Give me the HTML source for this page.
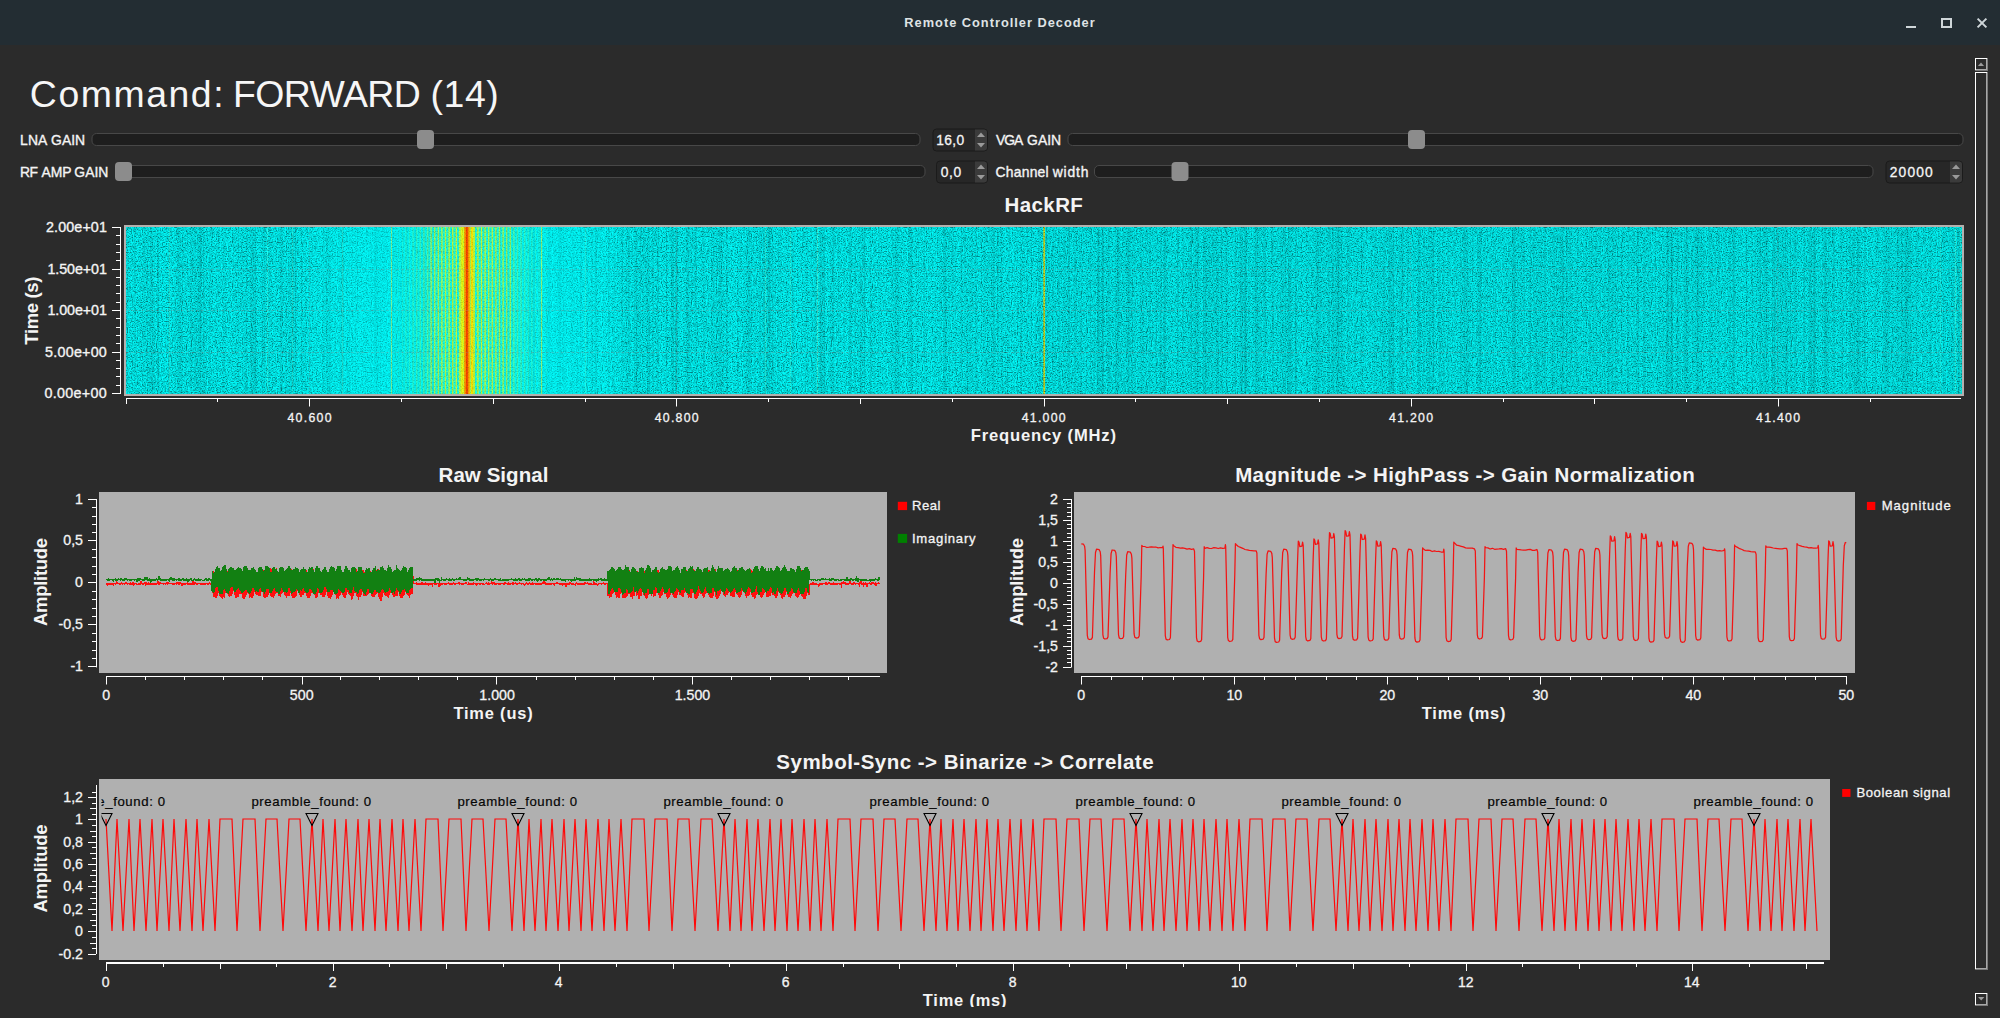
<!DOCTYPE html>
<html><head><meta charset="utf-8"><title>Remote Controller Decoder</title>
<style>
html,body{margin:0;padding:0;background:#2b2b2b;overflow:hidden}
svg{display:block;font-family:"Liberation Sans",sans-serif}
</style></head>
<body>
<svg width="2000" height="1018" viewBox="0 0 2000 1018">
<rect x="0" y="0" width="2000" height="1018" fill="#2b2b2b"/>
<g id="titlebar">
<rect x="0" y="0" width="2000" height="45" fill="#232d33"/>
<text x="904.35" y="26.8" font-size="12.8" font-weight="700" fill="#dfe3e5" textLength="190.30" lengthAdjust="spacing">Remote Controller Decoder</text>
<rect x="1906" y="26" width="10" height="2" fill="#cfd6d9"/>
<rect x="1942" y="19" width="9" height="8" fill="none" stroke="#cfd6d9" stroke-width="2"/>
<path d="M1977.6 18.6 L1986.4 27.4 M1986.4 18.6 L1977.6 27.4" stroke="#cfd6d9" stroke-width="2" fill="none"/>
</g>
<g id="controls">
<text x="29.83" y="106.6" font-size="37.4" font-weight="400" fill="#f6f6f6" textLength="193.74" lengthAdjust="spacing">Command:</text>
<text x="233.07" y="106.6" font-size="37.4" font-weight="400" fill="#f6f6f6" textLength="187.65" lengthAdjust="spacing">FORWARD</text>
<text x="430.58" y="106.6" font-size="37.4" font-weight="400" fill="#f6f6f6" textLength="68.15" lengthAdjust="spacing">(14)</text>
<text x="20.10" y="144.8" font-size="13.9" font-weight="400" fill="#f4f4f4" stroke="#f4f4f4" stroke-width="0.35" textLength="27.13" lengthAdjust="spacing">LNA</text>
<text x="51.11" y="144.8" font-size="13.9" font-weight="400" fill="#f4f4f4" stroke="#f4f4f4" stroke-width="0.35" textLength="34.02" lengthAdjust="spacing">GAIN</text>
<rect x="92.0" y="133.5" width="828.0" height="12" rx="4.5" ry="4.5" fill="#1e1e1e" stroke="#484848" stroke-width="1"/>
<rect x="417.0" y="130.0" width="17" height="19" rx="4" ry="4" fill="#8c8c8c"/>
<rect x="933.0" y="129.0" width="54.5" height="22.0" rx="3.5" ry="3.5" fill="#272727" stroke="#1b1b1b" stroke-width="1"/>
<path d="M975 129.5 H984 Q987 129.5 987 132.5 V147.5 Q987 150.5 984 150.5 H975 Z" fill="#3b3b3b"/>
<path d="M977 137.0 L981 132.5 L985 137.0 Z" fill="#9a9a9a"/>
<path d="M977 143.0 L981 147.5 L985 143.0 Z" fill="#9a9a9a"/>
<text x="936.23" y="145.3" font-size="13.8" font-weight="400" fill="#f4f4f4" stroke="#f4f4f4" stroke-width="0.3" textLength="27.89" lengthAdjust="spacing">16,0</text>
<text x="995.96" y="144.8" font-size="13.9" font-weight="400" fill="#f4f4f4" stroke="#f4f4f4" stroke-width="0.35" textLength="27.26" lengthAdjust="spacing">VGA</text>
<text x="1027.11" y="144.8" font-size="13.9" font-weight="400" fill="#f4f4f4" stroke="#f4f4f4" stroke-width="0.35" textLength="34.02" lengthAdjust="spacing">GAIN</text>
<rect x="1068.0" y="133.5" width="895.0" height="12" rx="4.5" ry="4.5" fill="#1e1e1e" stroke="#484848" stroke-width="1"/>
<rect x="1408.0" y="130.0" width="17" height="19" rx="4" ry="4" fill="#8c8c8c"/>
<text x="20.10" y="176.8" font-size="13.9" font-weight="400" fill="#f4f4f4" stroke="#f4f4f4" stroke-width="0.35" textLength="17.94" lengthAdjust="spacing">RF</text>
<text x="41.47" y="176.8" font-size="13.9" font-weight="400" fill="#f4f4f4" stroke="#f4f4f4" stroke-width="0.35" textLength="30.07" lengthAdjust="spacing">AMP</text>
<text x="74.31" y="176.8" font-size="13.9" font-weight="400" fill="#f4f4f4" stroke="#f4f4f4" stroke-width="0.35" textLength="34.02" lengthAdjust="spacing">GAIN</text>
<rect x="115.5" y="165.5" width="809.5" height="12" rx="4.5" ry="4.5" fill="#1e1e1e" stroke="#484848" stroke-width="1"/>
<rect x="115.0" y="162.0" width="17" height="19" rx="4" ry="4" fill="#8c8c8c"/>
<rect x="936.5" y="161.0" width="51" height="22.0" rx="3.5" ry="3.5" fill="#272727" stroke="#1b1b1b" stroke-width="1"/>
<path d="M975 161.5 H984 Q987 161.5 987 164.5 V179.5 Q987 182.5 984 182.5 H975 Z" fill="#3b3b3b"/>
<path d="M977 169.0 L981 164.5 L985 169.0 Z" fill="#9a9a9a"/>
<path d="M977 175.0 L981 179.5 L985 175.0 Z" fill="#9a9a9a"/>
<text x="940.65" y="177.3" font-size="13.8" font-weight="400" fill="#f4f4f4" stroke="#f4f4f4" stroke-width="0.3" textLength="20.54" lengthAdjust="spacing">0,0</text>
<text x="995.61" y="176.8" font-size="13.9" font-weight="400" fill="#f4f4f4" stroke="#f4f4f4" stroke-width="0.35" textLength="53.01" lengthAdjust="spacing">Channel</text>
<text x="1052.71" y="176.8" font-size="13.9" font-weight="400" fill="#f4f4f4" stroke="#f4f4f4" stroke-width="0.35" textLength="35.76" lengthAdjust="spacing">width</text>
<rect x="1094.5" y="165.5" width="778.5" height="12" rx="4.5" ry="4.5" fill="#1e1e1e" stroke="#484848" stroke-width="1"/>
<rect x="1171.5" y="162.0" width="17" height="19" rx="4" ry="4" fill="#8c8c8c"/>
<rect x="1886.0" y="161.0" width="76.5" height="22.0" rx="3.5" ry="3.5" fill="#272727" stroke="#1b1b1b" stroke-width="1"/>
<path d="M1950 161.5 H1959 Q1962 161.5 1962 164.5 V179.5 Q1962 182.5 1959 182.5 H1950 Z" fill="#3b3b3b"/>
<path d="M1952 169.0 L1956 164.5 L1960 169.0 Z" fill="#9a9a9a"/>
<path d="M1952 175.0 L1956 179.5 L1960 175.0 Z" fill="#9a9a9a"/>
<text x="1889.86" y="177.3" font-size="13.8" font-weight="400" fill="#f4f4f4" stroke="#f4f4f4" stroke-width="0.3" textLength="42.72" lengthAdjust="spacing">20000</text>
</g>
<g id="scrollbar">
<rect x="1975" y="58" width="13" height="13" fill="#2b2b2b"/>
<rect x="1975" y="58" width="13" height="1" fill="#ffffff"/>
<rect x="1975" y="58" width="1" height="13" fill="#ffffff"/>
<rect x="1986" y="59" width="1" height="12" fill="#a8a8a8"/>
<rect x="1987" y="58" width="1" height="13" fill="#7a7a7a"/>
<rect x="1976" y="69" width="11" height="1" fill="#a8a8a8"/>
<rect x="1975" y="70" width="13" height="1" fill="#7a7a7a"/>
<path d="M1977.9 66 L1981 62.6 L1984.1 66 Z" fill="#9a9a9a"/>
<rect x="1975" y="72" width="13" height="898" fill="#2b2b2b"/>
<rect x="1975" y="72" width="13" height="1" fill="#ffffff"/>
<rect x="1975" y="72" width="1" height="898" fill="#ffffff"/>
<rect x="1986" y="73" width="1" height="897" fill="#a8a8a8"/>
<rect x="1987" y="72" width="1" height="898" fill="#7a7a7a"/>
<rect x="1976" y="968" width="11" height="1" fill="#a8a8a8"/>
<rect x="1975" y="969" width="13" height="1" fill="#7a7a7a"/>
<rect x="1975" y="993" width="13" height="13" fill="#2b2b2b"/>
<rect x="1975" y="993" width="13" height="1" fill="#ffffff"/>
<rect x="1975" y="993" width="1" height="13" fill="#ffffff"/>
<rect x="1986" y="994" width="1" height="12" fill="#a8a8a8"/>
<rect x="1987" y="993" width="1" height="13" fill="#7a7a7a"/>
<rect x="1976" y="1004" width="11" height="1" fill="#a8a8a8"/>
<rect x="1975" y="1005" width="13" height="1" fill="#7a7a7a"/>
<path d="M1978 997 L1981.2 1000.4 L1984.4 997 Z" fill="#9a9a9a"/>
</g>
<g id="waterfall">
<text x="1004.54" y="212" font-size="20.5" font-weight="700" fill="#f4f4f4" textLength="78.33" lengthAdjust="spacing">HackRF</text>
<rect x="124" y="225" width="1840" height="171" fill="#b4b0ae"/>
<defs><filter id="nz" x="0" y="0" width="100%" height="100%" color-interpolation-filters="sRGB"><feTurbulence type="fractalNoise" baseFrequency="0.8" numOctaves="1" seed="11" result="t"/><feColorMatrix in="t" type="matrix" values="0 0 0 0 0  0 0 0 0 0  0 0 0 0 0  1 0 0 0 0"/><feComponentTransfer><feFuncA type="table" tableValues="0.5 0.5 0.5 0.41 0.235 0.10 0.03 0.005 0 0 0"/></feComponentTransfer></filter><filter id="nz2" x="0" y="0" width="100%" height="100%" color-interpolation-filters="sRGB"><feTurbulence type="fractalNoise" baseFrequency="0.35 0.22" numOctaves="2" seed="4" result="t"/><feColorMatrix in="t" type="matrix" values="0 0 0 0 0  0 0 0 0 0  0 0 0 0 0  0.45 0 0 0 -0.21"/></filter><filter id="nz3" x="0" y="0" width="100%" height="100%" color-interpolation-filters="sRGB"><feTurbulence type="fractalNoise" baseFrequency="0.45 0.0015" numOctaves="2" seed="9" result="t"/><feColorMatrix in="t" type="matrix" values="0 0 0 0 0  0 0 0 0 0  0 0 0 0 0  0.32 0 0 0 -0.135"/></filter><pattern id="rows" x="0" y="227" width="8" height="4.5" patternUnits="userSpaceOnUse"><rect x="0" y="0" width="8" height="2" fill="#7dff82"/></pattern><linearGradient id="rowfade" x1="0" x2="1" y1="0" y2="0"><stop offset="0" stop-color="#fff" stop-opacity="0.02"/><stop offset="0.22" stop-color="#fff" stop-opacity="0.08"/><stop offset="0.25" stop-color="#fff" stop-opacity="0.30"/><stop offset="0.44" stop-color="#fff" stop-opacity="0.75"/><stop offset="0.56" stop-color="#fff" stop-opacity="0.75"/><stop offset="0.78" stop-color="#fff" stop-opacity="0.28"/><stop offset="0.82" stop-color="#fff" stop-opacity="0.07"/><stop offset="1" stop-color="#fff" stop-opacity="0.02"/></linearGradient><linearGradient id="nzfade" x1="0" x2="1" y1="0" y2="0"><stop offset="0" stop-color="#fff"/><stop offset="0.14" stop-color="#c0c0c0"/><stop offset="0.28" stop-color="#909090"/><stop offset="0.42" stop-color="#686868"/><stop offset="0.47" stop-color="#585858"/><stop offset="0.53" stop-color="#585858"/><stop offset="0.62" stop-color="#6c6c6c"/><stop offset="0.74" stop-color="#909090"/><stop offset="0.88" stop-color="#c4c4c4"/><stop offset="1" stop-color="#fff"/></linearGradient><mask id="nzmask" maskUnits="userSpaceOnUse" x="126" y="227" width="1836" height="167"><rect x="126" y="227" width="1836" height="167" fill="#fff"/><rect x="292" y="227" width="350" height="167" fill="url(#nzfade)"/></mask><mask id="rowmask"><rect x="392" y="227" width="150" height="167" fill="url(#rowfade)"/></mask></defs>
<rect x="126" y="227" width="1836" height="167" fill="#00ffff"/>
<rect x="1044" y="227" width="918" height="167" fill="#008080" opacity="0.05"/>
<rect x="392" y="227" width="150" height="167" fill="url(#rows)" mask="url(#rowmask)"/>
<rect x="391" y="227" width="1" height="167" fill="#0ffff0"/>
<rect x="395" y="227" width="1" height="167" fill="#0dfff2"/>
<rect x="398" y="227" width="1" height="167" fill="#13ffec"/>
<rect x="402" y="227" width="1" height="167" fill="#19ffe6"/>
<rect x="405" y="227" width="1" height="167" fill="#19ffe6"/>
<rect x="406" y="227" width="1" height="167" fill="#15ffea"/>
<rect x="409" y="227" width="1" height="167" fill="#24ffdb"/>
<rect x="412" y="227" width="1" height="167" fill="#1bffe4"/>
<rect x="413" y="227" width="1" height="167" fill="#23ffdc"/>
<rect x="416" y="227" width="1" height="167" fill="#33ffcc"/>
<rect x="417" y="227" width="1" height="167" fill="#19ffe6"/>
<rect x="419" y="227" width="1" height="167" fill="#1bffe4"/>
<rect x="420" y="227" width="1" height="167" fill="#3cffc3"/>
<rect x="423" y="227" width="1" height="167" fill="#3bffc4"/>
<rect x="424" y="227" width="1" height="167" fill="#30ffcf"/>
<rect x="426" y="227" width="1" height="167" fill="#15ffea"/>
<rect x="427" y="227" width="1" height="167" fill="#51ffae"/>
<rect x="428" y="227" width="1" height="167" fill="#29ffd6"/>
<rect x="430" y="227" width="1" height="167" fill="#67ff98"/>
<rect x="431" y="227" width="1" height="167" fill="#85ff7a"/>
<rect x="433" y="227" width="1" height="167" fill="#14ffeb"/>
<rect x="434" y="227" width="1" height="167" fill="#9eff61"/>
<rect x="435" y="227" width="1" height="167" fill="#4bffb4"/>
<rect x="437" y="227" width="1" height="167" fill="#4dffb2"/>
<rect x="438" y="227" width="1" height="167" fill="#a5ff5a"/>
<rect x="439" y="227" width="1" height="167" fill="#16ffe9"/>
<rect x="441" y="227" width="1" height="167" fill="#94ff6b"/>
<rect x="442" y="227" width="1" height="167" fill="#75ff8a"/>
<rect x="444" y="227" width="1" height="167" fill="#31ffce"/>
<rect x="445" y="227" width="1" height="167" fill="#baff45"/>
<rect x="446" y="227" width="1" height="167" fill="#32ffcd"/>
<rect x="448" y="227" width="1" height="167" fill="#7cff83"/>
<rect x="449" y="227" width="1" height="167" fill="#a0ff5f"/>
<rect x="451" y="227" width="1" height="167" fill="#19ffe6"/>
<rect x="452" y="227" width="1" height="167" fill="#bdff42"/>
<rect x="453" y="227" width="1" height="167" fill="#5affa5"/>
<rect x="455" y="227" width="1" height="167" fill="#5cffa3"/>
<rect x="456" y="227" width="1" height="167" fill="#c4ff3b"/>
<rect x="457" y="227" width="1" height="167" fill="#1affe5"/>
<rect x="459" y="227" width="1" height="167" fill="#afff50"/>
<rect x="460" y="227" width="1" height="167" fill="#b4ff4c"/>
<rect x="461" y="227" width="1" height="167" fill="#e2ff1e"/>
<rect x="462" y="227" width="1" height="167" fill="#f2ff0e"/>
<rect x="463" y="227" width="1" height="167" fill="#d2ff2e"/>
<rect x="464" y="227" width="1" height="167" fill="#ffa800"/>
<rect x="465" y="227" width="1" height="167" fill="#ff9200"/>
<rect x="466" y="227" width="1" height="167" fill="#ff4400"/>
<rect x="467" y="227" width="1" height="167" fill="#ff5600"/>
<rect x="468" y="227" width="1" height="167" fill="#ff9a00"/>
<rect x="469" y="227" width="1" height="167" fill="#ffc200"/>
<rect x="470" y="227" width="1" height="167" fill="#a8ff58"/>
<rect x="471" y="227" width="1" height="167" fill="#fff200"/>
<rect x="472" y="227" width="1" height="167" fill="#ffee00"/>
<rect x="473" y="227" width="1" height="167" fill="#c4ff3c"/>
<rect x="474" y="227" width="1" height="167" fill="#cbff34"/>
<rect x="475" y="227" width="1" height="167" fill="#1affe5"/>
<rect x="477" y="227" width="1" height="167" fill="#acff53"/>
<rect x="478" y="227" width="1" height="167" fill="#86ff79"/>
<rect x="480" y="227" width="1" height="167" fill="#36ffc9"/>
<rect x="481" y="227" width="1" height="167" fill="#c9ff36"/>
<rect x="482" y="227" width="1" height="167" fill="#35ffca"/>
<rect x="484" y="227" width="1" height="167" fill="#80ff7f"/>
<rect x="485" y="227" width="1" height="167" fill="#a2ff5d"/>
<rect x="487" y="227" width="1" height="167" fill="#18ffe7"/>
<rect x="488" y="227" width="1" height="167" fill="#b6ff49"/>
<rect x="489" y="227" width="1" height="167" fill="#55ffaa"/>
<rect x="491" y="227" width="1" height="167" fill="#54ffab"/>
<rect x="492" y="227" width="1" height="167" fill="#b0ff4f"/>
<rect x="493" y="227" width="1" height="167" fill="#17ffe8"/>
<rect x="495" y="227" width="1" height="167" fill="#95ff6a"/>
<rect x="496" y="227" width="1" height="167" fill="#74ff8b"/>
<rect x="498" y="227" width="1" height="167" fill="#2effd1"/>
<rect x="499" y="227" width="1" height="167" fill="#adff52"/>
<rect x="500" y="227" width="1" height="167" fill="#2effd1"/>
<rect x="502" y="227" width="1" height="167" fill="#6eff91"/>
<rect x="503" y="227" width="1" height="167" fill="#8bff74"/>
<rect x="505" y="227" width="1" height="167" fill="#15ffea"/>
<rect x="506" y="227" width="1" height="167" fill="#9bff64"/>
<rect x="507" y="227" width="1" height="167" fill="#48ffb7"/>
<rect x="509" y="227" width="1" height="167" fill="#47ffb8"/>
<rect x="510" y="227" width="1" height="167" fill="#95ff6a"/>
<rect x="511" y="227" width="1" height="167" fill="#13ffec"/>
<rect x="513" y="227" width="1" height="167" fill="#42ffbd"/>
<rect x="514" y="227" width="1" height="167" fill="#32ffcd"/>
<rect x="516" y="227" width="1" height="167" fill="#13ffec"/>
<rect x="517" y="227" width="1" height="167" fill="#45ffba"/>
<rect x="518" y="227" width="1" height="167" fill="#12ffed"/>
<rect x="520" y="227" width="1" height="167" fill="#28ffd7"/>
<rect x="521" y="227" width="1" height="167" fill="#31ffce"/>
<rect x="524" y="227" width="1" height="167" fill="#31ffce"/>
<rect x="525" y="227" width="1" height="167" fill="#14ffeb"/>
<rect x="527" y="227" width="1" height="167" fill="#13ffec"/>
<rect x="528" y="227" width="1" height="167" fill="#26ffd9"/>
<rect x="531" y="227" width="1" height="167" fill="#1dffe2"/>
<rect x="532" y="227" width="1" height="167" fill="#16ffe9"/>
<rect x="535" y="227" width="1" height="167" fill="#1dffe2"/>
<rect x="538" y="227" width="1" height="167" fill="#10ffef"/>
<rect x="539" y="227" width="1" height="167" fill="#13ffec"/>
<rect x="542" y="227" width="1" height="167" fill="#12ffed"/>
<rect x="546" y="227" width="1" height="167" fill="#0ffff0"/>
<rect x="541" y="227" width="1" height="167" fill="#b8ff60" opacity="0.8"/>
<rect x="1043" y="227" width="1" height="167" fill="#a8fa58" opacity="0.95"/>
<rect x="1044" y="227" width="1" height="167" fill="#e8ee20" opacity="0.95"/>
<rect x="169" y="227" width="1" height="167" fill="#60ffd8" opacity="0.4"/>
<rect x="267" y="227" width="1" height="167" fill="#60ffd8" opacity="0.35"/>
<rect x="292" y="227" width="1" height="167" fill="#60ffd8" opacity="0.3"/>
<rect x="342" y="227" width="1" height="167" fill="#70ffd0" opacity="0.3"/>
<rect x="391" y="227" width="1" height="167" fill="#a8ff80" opacity="0.7"/>
<rect x="585" y="227" width="1" height="167" fill="#60ffd0" opacity="0.3"/>
<rect x="765" y="227" width="1" height="167" fill="#60ffd0" opacity="0.35"/>
<rect x="790" y="227" width="1" height="167" fill="#60ffd0" opacity="0.3"/>
<rect x="817" y="227" width="1" height="167" fill="#70ffd0" opacity="0.5"/>
<rect x="1940" y="227" width="1" height="167" fill="#50ffe0" opacity="0.3"/>
<rect x="1955" y="227" width="1" height="167" fill="#50ffe0" opacity="0.5"/>
<rect x="1960" y="227" width="1" height="167" fill="#50ffe0" opacity="0.5"/>
<g mask="url(#nzmask)"><rect x="126" y="227" width="1836" height="167" fill="#000" filter="url(#nz)"/><rect x="126" y="227" width="1836" height="167" fill="#000" filter="url(#nz2)"/><rect x="126" y="227" width="1836" height="167" fill="#000" filter="url(#nz3)"/></g>
<line x1="126" x2="1962" y1="269.5" y2="269.5" stroke="#909090" stroke-width="1" stroke-dasharray="3 2" opacity="0.28"/>
<line x1="126" x2="1962" y1="310.5" y2="310.5" stroke="#909090" stroke-width="1" stroke-dasharray="3 2" opacity="0.28"/>
<line x1="126" x2="1962" y1="352.5" y2="352.5" stroke="#909090" stroke-width="1" stroke-dasharray="3 2" opacity="0.28"/>
<line x1="309.5" x2="309.5" y1="227" y2="394" stroke="#909090" stroke-width="1" stroke-dasharray="3 2" opacity="0.22"/>
<line x1="676.5" x2="676.5" y1="227" y2="394" stroke="#909090" stroke-width="1" stroke-dasharray="3 2" opacity="0.22"/>
<line x1="1410.5" x2="1410.5" y1="227" y2="394" stroke="#909090" stroke-width="1" stroke-dasharray="3 2" opacity="0.22"/>
<line x1="1777.5" x2="1777.5" y1="227" y2="394" stroke="#909090" stroke-width="1" stroke-dasharray="3 2" opacity="0.22"/>
<rect x="120" y="227" width="1" height="167" fill="#ffffff"/>
<rect x="112" y="393" width="8" height="1" fill="#ffffff"/>
<rect x="116" y="385" width="4" height="1" fill="#ffffff"/>
<rect x="116" y="376" width="4" height="1" fill="#ffffff"/>
<rect x="116" y="368" width="4" height="1" fill="#ffffff"/>
<rect x="116" y="360" width="4" height="1" fill="#ffffff"/>
<rect x="112" y="352" width="8" height="1" fill="#ffffff"/>
<rect x="116" y="343" width="4" height="1" fill="#ffffff"/>
<rect x="116" y="335" width="4" height="1" fill="#ffffff"/>
<rect x="116" y="327" width="4" height="1" fill="#ffffff"/>
<rect x="116" y="318" width="4" height="1" fill="#ffffff"/>
<rect x="112" y="310" width="8" height="1" fill="#ffffff"/>
<rect x="116" y="302" width="4" height="1" fill="#ffffff"/>
<rect x="116" y="293" width="4" height="1" fill="#ffffff"/>
<rect x="116" y="285" width="4" height="1" fill="#ffffff"/>
<rect x="116" y="277" width="4" height="1" fill="#ffffff"/>
<rect x="112" y="269" width="8" height="1" fill="#ffffff"/>
<rect x="116" y="260" width="4" height="1" fill="#ffffff"/>
<rect x="116" y="252" width="4" height="1" fill="#ffffff"/>
<rect x="116" y="244" width="4" height="1" fill="#ffffff"/>
<rect x="116" y="235" width="4" height="1" fill="#ffffff"/>
<rect x="112" y="227" width="8" height="1" fill="#ffffff"/>
<text x="45.96" y="232.3" font-size="14.3" font-weight="400" fill="#f4f4f4" stroke="#f4f4f4" stroke-width="0.35" textLength="60.93" lengthAdjust="spacing">2.00e+01</text>
<text x="47.52" y="274.3" font-size="14.3" font-weight="400" fill="#f4f4f4" stroke="#f4f4f4" stroke-width="0.35" textLength="59.36" lengthAdjust="spacing">1.50e+01</text>
<text x="47.52" y="315.3" font-size="14.3" font-weight="400" fill="#f4f4f4" stroke="#f4f4f4" stroke-width="0.35" textLength="59.36" lengthAdjust="spacing">1.00e+01</text>
<text x="45.11" y="357.3" font-size="14.3" font-weight="400" fill="#f4f4f4" stroke="#f4f4f4" stroke-width="0.35" textLength="61.71" lengthAdjust="spacing">5.00e+00</text>
<text x="44.54" y="398.3" font-size="14.3" font-weight="400" fill="#f4f4f4" stroke="#f4f4f4" stroke-width="0.35" textLength="62.17" lengthAdjust="spacing">0.00e+00</text>
<text transform="translate(38.0,311.1) rotate(-90)" x="-33.62" y="0" font-size="18.5" font-weight="700" fill="#f4f4f4" textLength="68.11" lengthAdjust="spacing">Time (s)</text>
<rect x="126" y="398" width="1835" height="1" fill="#ffffff"/>
<rect x="126" y="398" width="1" height="6" fill="#ffffff"/>
<rect x="217" y="398" width="1" height="4" fill="#ffffff"/>
<rect x="309" y="398" width="1" height="8.5" fill="#ffffff"/>
<rect x="401" y="398" width="1" height="4" fill="#ffffff"/>
<rect x="493" y="398" width="1" height="6" fill="#ffffff"/>
<rect x="585" y="398" width="1" height="4" fill="#ffffff"/>
<rect x="676" y="398" width="1" height="8.5" fill="#ffffff"/>
<rect x="768" y="398" width="1" height="4" fill="#ffffff"/>
<rect x="860" y="398" width="1" height="6" fill="#ffffff"/>
<rect x="952" y="398" width="1" height="4" fill="#ffffff"/>
<rect x="1044" y="398" width="1" height="8.5" fill="#ffffff"/>
<rect x="1135" y="398" width="1" height="4" fill="#ffffff"/>
<rect x="1227" y="398" width="1" height="6" fill="#ffffff"/>
<rect x="1319" y="398" width="1" height="4" fill="#ffffff"/>
<rect x="1411" y="398" width="1" height="8.5" fill="#ffffff"/>
<rect x="1503" y="398" width="1" height="4" fill="#ffffff"/>
<rect x="1594" y="398" width="1" height="6" fill="#ffffff"/>
<rect x="1686" y="398" width="1" height="4" fill="#ffffff"/>
<rect x="1778" y="398" width="1" height="8.5" fill="#ffffff"/>
<rect x="1870" y="398" width="1" height="4" fill="#ffffff"/>
<text x="287.44" y="421.6" font-size="12.3" font-weight="400" fill="#f4f4f4" stroke="#f4f4f4" stroke-width="0.3" textLength="44.04" lengthAdjust="spacing">40.600</text>
<text x="654.64" y="421.6" font-size="12.3" font-weight="400" fill="#f4f4f4" stroke="#f4f4f4" stroke-width="0.3" textLength="44.04" lengthAdjust="spacing">40.800</text>
<text x="1021.64" y="421.6" font-size="12.3" font-weight="400" fill="#f4f4f4" stroke="#f4f4f4" stroke-width="0.3" textLength="44.04" lengthAdjust="spacing">41.000</text>
<text x="1389.04" y="421.6" font-size="12.3" font-weight="400" fill="#f4f4f4" stroke="#f4f4f4" stroke-width="0.3" textLength="44.04" lengthAdjust="spacing">41.200</text>
<text x="1756.04" y="421.6" font-size="12.3" font-weight="400" fill="#f4f4f4" stroke="#f4f4f4" stroke-width="0.3" textLength="44.04" lengthAdjust="spacing">41.400</text>
<text x="970.84" y="441.4" font-size="16.6" font-weight="700" fill="#f4f4f4" textLength="145.15" lengthAdjust="spacing">Frequency (MHz)</text>
</g>
<g id="raw">
<text x="438.54" y="481.9" font-size="20.5" font-weight="700" fill="#f4f4f4" textLength="109.91" lengthAdjust="spacing">Raw Signal</text>
<rect x="99" y="492" width="788" height="181" fill="#b0b0b0"/>
<rect x="96" y="499" width="1" height="168.39999999999998" fill="#ffffff"/>
<rect x="88" y="499" width="8" height="1" fill="#ffffff"/>
<rect x="92" y="507" width="4" height="1" fill="#ffffff"/>
<rect x="92" y="516" width="4" height="1" fill="#ffffff"/>
<rect x="92" y="524" width="4" height="1" fill="#ffffff"/>
<rect x="92" y="532" width="4" height="1" fill="#ffffff"/>
<rect x="88" y="540" width="8" height="1" fill="#ffffff"/>
<rect x="92" y="549" width="4" height="1" fill="#ffffff"/>
<rect x="92" y="557" width="4" height="1" fill="#ffffff"/>
<rect x="92" y="566" width="4" height="1" fill="#ffffff"/>
<rect x="92" y="574" width="4" height="1" fill="#ffffff"/>
<rect x="88" y="582" width="8" height="1" fill="#ffffff"/>
<rect x="92" y="591" width="4" height="1" fill="#ffffff"/>
<rect x="92" y="599" width="4" height="1" fill="#ffffff"/>
<rect x="92" y="608" width="4" height="1" fill="#ffffff"/>
<rect x="92" y="616" width="4" height="1" fill="#ffffff"/>
<rect x="88" y="624" width="8" height="1" fill="#ffffff"/>
<rect x="92" y="633" width="4" height="1" fill="#ffffff"/>
<rect x="92" y="641" width="4" height="1" fill="#ffffff"/>
<rect x="92" y="650" width="4" height="1" fill="#ffffff"/>
<rect x="92" y="658" width="4" height="1" fill="#ffffff"/>
<rect x="88" y="666" width="8" height="1" fill="#ffffff"/>
<text x="83" y="504.4" font-size="14.2" font-weight="400" fill="#f4f4f4" text-anchor="end" stroke="#f4f4f4" stroke-width="0.3">1</text>
<text x="83" y="545.4" font-size="14.2" font-weight="400" fill="#f4f4f4" text-anchor="end" stroke="#f4f4f4" stroke-width="0.3">0,5</text>
<text x="83" y="587.4" font-size="14.2" font-weight="400" fill="#f4f4f4" text-anchor="end" stroke="#f4f4f4" stroke-width="0.3">0</text>
<text x="83" y="629.4" font-size="14.2" font-weight="400" fill="#f4f4f4" text-anchor="end" stroke="#f4f4f4" stroke-width="0.3">-0,5</text>
<text x="83" y="671.4" font-size="14.2" font-weight="400" fill="#f4f4f4" text-anchor="end" stroke="#f4f4f4" stroke-width="0.3">-1</text>
<text transform="translate(46.9,582) rotate(-90)" x="-44.10" y="0" font-size="18.5" font-weight="700" fill="#f4f4f4" textLength="88.25" lengthAdjust="spacing">Amplitude</text>
<rect x="106" y="676" width="774" height="1" fill="#ffffff"/>
<rect x="106" y="676" width="1" height="8.5" fill="#ffffff"/>
<rect x="145" y="676" width="1" height="4" fill="#ffffff"/>
<rect x="184" y="676" width="1" height="4" fill="#ffffff"/>
<rect x="223" y="676" width="1" height="4" fill="#ffffff"/>
<rect x="262" y="676" width="1" height="4" fill="#ffffff"/>
<rect x="302" y="676" width="1" height="8.5" fill="#ffffff"/>
<rect x="340" y="676" width="1" height="4" fill="#ffffff"/>
<rect x="379" y="676" width="1" height="4" fill="#ffffff"/>
<rect x="418" y="676" width="1" height="4" fill="#ffffff"/>
<rect x="457" y="676" width="1" height="4" fill="#ffffff"/>
<rect x="496" y="676" width="1" height="8.5" fill="#ffffff"/>
<rect x="536" y="676" width="1" height="4" fill="#ffffff"/>
<rect x="575" y="676" width="1" height="4" fill="#ffffff"/>
<rect x="614" y="676" width="1" height="4" fill="#ffffff"/>
<rect x="653" y="676" width="1" height="4" fill="#ffffff"/>
<rect x="692" y="676" width="1" height="8.5" fill="#ffffff"/>
<rect x="731" y="676" width="1" height="4" fill="#ffffff"/>
<rect x="770" y="676" width="1" height="4" fill="#ffffff"/>
<rect x="809" y="676" width="1" height="4" fill="#ffffff"/>
<rect x="848" y="676" width="1" height="4" fill="#ffffff"/>
<text x="106.3" y="699.7" font-size="14.2" font-weight="400" fill="#f4f4f4" text-anchor="middle" stroke="#f4f4f4" stroke-width="0.3">0</text>
<text x="301.7" y="699.7" font-size="14.2" font-weight="400" fill="#f4f4f4" text-anchor="middle" stroke="#f4f4f4" stroke-width="0.3">500</text>
<text x="497.1" y="699.7" font-size="14.2" font-weight="400" fill="#f4f4f4" text-anchor="middle" stroke="#f4f4f4" stroke-width="0.3">1.000</text>
<text x="692.5" y="699.7" font-size="14.2" font-weight="400" fill="#f4f4f4" text-anchor="middle" stroke="#f4f4f4" stroke-width="0.3">1.500</text>
<text x="453.38" y="719.4" font-size="16.4" font-weight="700" fill="#f4f4f4" textLength="79.32" lengthAdjust="spacing">Time (us)</text>
<polyline points="106.3,584.0 106.7,584.4 107.1,583.1 107.5,584.9 107.9,584.9 108.3,583.6 108.6,583.6 109.0,583.4 109.4,584.0 109.8,584.1 110.2,584.3 110.6,583.8 111.0,583.9 111.4,584.8 111.8,582.8 112.2,583.4 112.6,584.4 112.9,584.8 113.3,585.1 113.7,584.5 114.1,583.6 114.5,583.4 114.9,583.1 115.3,583.2 115.7,584.7 116.1,583.6 116.5,581.3 116.9,584.2 117.2,582.9 117.6,582.7 118.0,584.3 118.4,583.1 118.8,584.0 119.2,582.9 119.6,584.5 120.0,584.1 120.4,584.4 120.8,583.8 121.2,583.3 121.5,582.8 121.9,582.7 122.3,584.1 122.7,584.4 123.1,583.6 123.5,583.5 123.9,583.6 124.3,584.5 124.7,583.5 125.1,584.2 125.4,582.3 125.8,583.6 126.2,583.3 126.6,582.4 127.0,583.8 127.4,582.9 127.8,584.5 128.2,583.3 128.6,583.8 129.0,583.3 129.4,583.6 129.7,585.0 130.1,583.0 130.5,583.1 130.9,585.1 131.3,583.7 131.7,583.6 132.1,584.9 132.5,583.7 132.9,582.4 133.3,582.9 133.7,585.0 134.0,585.1 134.4,583.4 134.8,584.2 135.2,583.7 135.6,582.9 136.0,583.3 136.4,583.5 136.8,584.4 137.2,584.0 137.6,584.8 138.0,584.3 138.3,583.6 138.7,583.4 139.1,583.2 139.5,584.6 139.9,584.0 140.3,583.8 140.7,584.2 141.1,581.6 141.5,583.9 141.9,583.3 142.3,584.4 142.6,584.0 143.0,583.7 143.4,584.3 143.8,584.4 144.2,583.2 144.6,583.3 145.0,581.9 145.4,584.0 145.8,585.6 146.2,583.4 146.6,582.0 146.9,583.2 147.3,583.3 147.7,583.7 148.1,584.4 148.5,582.3 148.9,582.9 149.3,583.9 149.7,583.0 150.1,584.7 150.5,583.8 150.9,583.6 151.2,584.3 151.6,583.8 152.0,584.6 152.4,583.8 152.8,583.8 153.2,584.4 153.6,583.7 154.0,583.5 154.4,583.9 154.8,584.3 155.2,584.5 155.5,583.4 155.9,583.0 156.3,584.3 156.7,583.6 157.1,583.4 157.5,583.0 157.9,581.0 158.3,584.7 158.7,583.4 159.1,585.1 159.4,583.8 159.8,582.4 160.2,583.8 160.6,582.7 161.0,583.6 161.4,583.7 161.8,583.7 162.2,584.1 162.6,583.1 163.0,583.9 163.4,584.2 163.7,583.1 164.1,583.5 164.5,583.7 164.9,583.4 165.3,583.6 165.7,584.6 166.1,583.8 166.5,584.1 166.9,582.6 167.3,584.3 167.7,583.3 168.0,583.0 168.4,583.0 168.8,583.7 169.2,582.8 169.6,583.6 170.0,583.6 170.4,583.4 170.8,583.6 171.2,584.1 171.6,583.2 172.0,583.7 172.3,584.6 172.7,583.1 173.1,584.4 173.5,583.9 173.9,583.8 174.3,584.3 174.7,583.7 175.1,583.6 175.5,583.4 175.9,583.4 176.3,584.9 176.6,582.2 177.0,582.8 177.4,584.3 177.8,583.2 178.2,582.6 178.6,583.2 179.0,584.4 179.4,584.7 179.8,583.4 180.2,582.4 180.6,583.3 180.9,584.2 181.3,583.8 181.7,584.9 182.1,585.4 182.5,583.8 182.9,583.3 183.3,583.7 183.7,584.5 184.1,583.8 184.5,584.3 184.9,583.3 185.2,584.8 185.6,584.6 186.0,583.2 186.4,584.0 186.8,583.6 187.2,583.1 187.6,583.0 188.0,585.0 188.4,583.2 188.8,583.9 189.1,585.1 189.5,584.3 189.9,583.1 190.3,584.0 190.7,584.6 191.1,584.3 191.5,583.0 191.9,583.5 192.3,584.2 192.7,584.1 193.1,580.3 193.4,584.3 193.8,583.6 194.2,584.5 194.6,583.0 195.0,582.8 195.4,583.6 195.8,583.8 196.2,583.7 196.6,584.5 197.0,584.3 197.4,584.5 197.7,584.0 198.1,584.0 198.5,583.3 198.9,584.1 199.3,583.1 199.7,583.8 200.1,583.8 200.5,584.7 200.9,583.5 201.3,584.6 201.7,583.4 202.0,583.8 202.4,584.5 202.8,584.6 203.2,583.4 203.6,584.2 204.0,584.2 204.4,583.2 204.8,584.7 205.2,584.1 205.6,583.9 206.0,583.9 206.3,583.1 206.7,583.4 207.1,583.8 207.5,583.4 207.9,585.0 208.3,584.4 208.7,582.9 209.1,584.0 209.5,583.0 209.9,583.0 210.3,584.5 210.6,584.6 211.0,584.0 211.4,584.1 211.8,582.6 212.2,589.4 212.6,593.4 213.0,571.3 213.4,583.6 213.8,597.2 214.2,574.0 214.6,579.4 214.9,597.1 215.3,577.2 215.7,576.9 216.1,597.6 216.5,582.5 216.9,572.1 217.3,596.0 217.7,586.5 218.1,570.7 218.5,592.4 218.9,591.3 219.2,569.2 219.6,586.5 220.0,595.9 220.4,570.9 220.8,583.8 221.2,598.4 221.6,572.9 222.0,578.5 222.4,598.5 222.8,578.4 223.1,574.6 223.5,597.1 223.9,581.9 224.3,572.1 224.7,597.6 225.1,587.3 225.5,570.0 225.9,591.9 226.3,592.8 226.7,570.4 227.1,588.1 227.4,594.4 227.8,571.2 228.2,583.1 228.6,595.5 229.0,574.4 229.4,576.6 229.8,597.4 230.2,579.1 230.6,574.5 231.0,595.6 231.4,584.4 231.7,572.3 232.1,593.8 232.5,589.2 232.9,571.4 233.3,589.8 233.7,591.1 234.1,572.0 234.5,586.5 234.9,595.0 235.3,573.9 235.7,582.7 236.0,597.9 236.4,575.6 236.8,576.7 237.2,597.3 237.6,580.8 238.0,574.9 238.4,596.7 238.8,584.3 239.2,571.4 239.6,593.5 240.0,589.8 240.3,570.2 240.7,591.7 241.1,594.0 241.5,571.1 241.9,586.0 242.3,597.6 242.7,573.3 243.1,580.0 243.5,599.3 243.9,576.0 244.3,575.5 244.6,598.5 245.0,581.1 245.4,570.5 245.8,596.5 246.2,586.1 246.6,570.2 247.0,593.0 247.4,591.3 247.8,570.3 248.2,589.3 248.6,594.4 248.9,570.8 249.3,584.1 249.7,598.2 250.1,573.8 250.5,579.4 250.9,597.3 251.3,576.2 251.7,575.3 252.1,598.1 252.5,582.5 252.9,571.7 253.2,595.6 253.6,585.5 254.0,571.1 254.4,591.4 254.8,591.9 255.2,571.0 255.6,588.4 256.0,593.7 256.4,572.5 256.8,582.3 257.1,595.2 257.5,575.0 257.9,579.0 258.3,596.4 258.7,580.0 259.1,575.8 259.5,596.4 259.9,582.9 260.3,573.0 260.7,596.2 261.1,587.3 261.4,569.7 261.8,589.9 262.2,592.4 262.6,570.2 263.0,588.1 263.4,596.5 263.8,570.2 264.2,582.5 264.6,597.9 265.0,575.0 265.4,579.8 265.7,597.6 266.1,578.2 266.5,572.4 266.9,597.3 267.3,584.1 267.7,571.4 268.1,594.9 268.5,589.1 268.9,568.1 269.3,591.5 269.7,593.0 270.0,568.4 270.4,586.2 270.8,596.1 271.2,568.8 271.6,582.4 272.0,597.1 272.4,574.8 272.8,576.1 273.2,597.7 273.6,579.5 274.0,571.7 274.3,595.6 274.7,584.9 275.1,571.8 275.5,593.9 275.9,590.5 276.3,568.5 276.7,589.0 277.1,592.5 277.5,571.1 277.9,584.4 278.3,595.6 278.6,574.4 279.0,580.6 279.4,595.7 279.8,576.5 280.2,576.1 280.6,597.4 281.0,580.4 281.4,572.5 281.8,594.3 282.2,584.8 282.6,571.0 282.9,591.9 283.3,590.8 283.7,569.7 284.1,588.5 284.5,594.5 284.9,571.9 285.3,583.5 285.7,596.0 286.1,572.0 286.5,579.6 286.8,598.4 287.2,576.5 287.6,573.4 288.0,595.7 288.4,582.7 288.8,570.7 289.2,596.4 289.6,587.0 290.0,569.9 290.4,592.7 290.8,591.2 291.1,569.1 291.5,588.2 291.9,595.7 292.3,571.5 292.7,582.7 293.1,597.7 293.5,575.1 293.9,579.1 294.3,598.0 294.7,577.0 295.1,573.7 295.4,597.3 295.8,586.0 296.2,571.3 296.6,596.1 297.0,587.3 297.4,570.5 297.8,590.6 298.2,591.2 298.6,571.8 299.0,586.2 299.4,595.1 299.7,572.8 300.1,582.0 300.5,597.1 300.9,575.9 301.3,576.7 301.7,596.5 302.1,578.9 302.5,573.6 302.9,595.4 303.3,584.3 303.7,572.8 304.0,593.3 304.4,589.0 304.8,569.5 305.2,589.5 305.6,593.0 306.0,570.1 306.4,586.4 306.8,596.4 307.2,573.5 307.6,580.7 308.0,597.5 308.3,575.7 308.7,576.9 309.1,597.6 309.5,581.3 309.9,571.3 310.3,595.5 310.7,585.6 311.1,568.2 311.5,592.7 311.9,588.7 312.3,568.4 312.6,588.6 313.0,593.2 313.4,568.7 313.8,585.0 314.2,595.0 314.6,573.4 315.0,580.2 315.4,598.4 315.8,576.2 316.2,574.9 316.6,598.3 316.9,580.4 317.3,573.1 317.7,597.4 318.1,585.6 318.5,569.2 318.9,592.1 319.3,589.3 319.7,569.4 320.1,588.2 320.5,595.4 320.8,572.7 321.2,584.1 321.6,594.9 322.0,574.6 322.4,579.2 322.8,597.1 323.2,577.0 323.6,575.4 324.0,596.5 324.4,583.2 324.8,573.8 325.1,594.7 325.5,586.2 325.9,570.4 326.3,591.1 326.7,591.1 327.1,572.3 327.5,587.8 327.9,596.3 328.3,571.9 328.7,582.6 329.1,597.6 329.4,574.1 329.8,577.1 330.2,599.3 330.6,578.2 331.0,575.4 331.4,596.9 331.8,583.2 332.2,571.5 332.6,594.5 333.0,585.7 333.4,568.4 333.7,591.5 334.1,591.9 334.5,569.3 334.9,587.1 335.3,595.4 335.7,571.7 336.1,582.5 336.5,598.5 336.9,576.3 337.3,577.3 337.7,597.5 338.0,580.1 338.4,574.2 338.8,598.7 339.2,583.8 339.6,570.6 340.0,594.5 340.4,588.2 340.8,569.5 341.2,589.6 341.6,593.0 342.0,571.9 342.3,585.3 342.7,594.6 343.1,574.0 343.5,581.0 343.9,596.9 344.3,576.8 344.7,577.0 345.1,597.6 345.5,579.6 345.9,574.6 346.3,595.2 346.6,585.5 347.0,567.8 347.4,591.5 347.8,588.3 348.2,570.4 348.6,590.3 349.0,594.0 349.4,570.1 349.8,580.8 350.2,596.4 350.6,573.3 350.9,579.3 351.3,600.3 351.7,577.4 352.1,574.8 352.5,599.0 352.9,581.4 353.3,572.1 353.7,595.5 354.1,585.3 354.5,570.4 354.8,593.2 355.2,591.9 355.6,568.7 356.0,587.8 356.4,595.5 356.8,568.6 357.2,583.2 357.6,596.5 358.0,573.0 358.4,577.8 358.8,599.5 359.1,576.4 359.5,575.3 359.9,596.8 360.3,581.8 360.7,572.3 361.1,595.3 361.5,587.2 361.9,570.6 362.3,591.7 362.7,590.4 363.1,570.5 363.4,587.7 363.8,595.9 364.2,572.1 364.6,583.2 365.0,596.4 365.4,577.7 365.8,578.3 366.2,595.9 366.6,579.2 367.0,575.1 367.4,594.9 367.7,583.3 368.1,571.8 368.5,593.6 368.9,588.0 369.3,571.0 369.7,591.2 370.1,592.1 370.5,571.5 370.9,586.3 371.3,595.7 371.7,573.2 372.0,582.6 372.4,596.6 372.8,575.3 373.2,576.7 373.6,597.2 374.0,580.3 374.4,572.0 374.8,596.9 375.2,584.5 375.6,569.7 376.0,594.4 376.3,588.0 376.7,569.7 377.1,589.7 377.5,592.8 377.9,569.0 378.3,585.8 378.7,596.9 379.1,570.4 379.5,580.0 379.9,598.8 380.3,574.2 380.6,576.0 381.0,600.5 381.4,581.0 381.8,570.8 382.2,596.6 382.6,584.8 383.0,570.9 383.4,592.8 383.8,590.0 384.2,570.1 384.5,588.9 384.9,594.5 385.3,570.4 385.7,585.3 386.1,596.4 386.5,573.3 386.9,580.8 387.3,597.2 387.7,575.8 388.1,576.3 388.5,598.2 388.8,582.1 389.2,572.6 389.6,595.3 390.0,585.8 390.4,570.4 390.8,592.5 391.2,590.6 391.6,569.9 392.0,586.7 392.4,595.0 392.8,571.7 393.1,582.4 393.5,596.7 393.9,575.2 394.3,579.5 394.7,596.7 395.1,577.8 395.5,575.3 395.9,596.0 396.3,580.6 396.7,571.4 397.1,595.8 397.4,586.6 397.8,569.1 398.2,592.0 398.6,590.7 399.0,569.7 399.4,588.0 399.8,596.4 400.2,571.3 400.6,581.2 401.0,597.7 401.4,570.8 401.7,578.0 402.1,598.0 402.5,577.8 402.9,572.3 403.3,596.4 403.7,584.8 404.1,570.0 404.5,594.7 404.9,587.8 405.3,570.4 405.7,591.2 406.0,591.8 406.4,570.6 406.8,586.7 407.2,595.3 407.6,572.4 408.0,582.2 408.4,595.7 408.8,574.9 409.2,577.8 409.6,597.5 410.0,580.6 410.3,574.3 410.7,595.0 411.1,584.4 411.5,571.6 411.9,593.8 412.3,589.0 412.7,570.4 413.1,583.8 413.5,583.8 413.9,583.7 414.3,583.6 414.6,584.2 415.0,583.1 415.4,583.8 415.8,582.9 416.2,584.4 416.6,582.3 417.0,584.7 417.4,583.3 417.8,584.4 418.2,583.9 418.5,584.2 418.9,583.9 419.3,583.8 419.7,583.8 420.1,584.7 420.5,584.0 420.9,583.9 421.3,584.5 421.7,584.1 422.1,582.3 422.5,583.8 422.8,583.4 423.2,584.9 423.6,583.2 424.0,583.9 424.4,583.5 424.8,585.1 425.2,584.5 425.6,583.3 426.0,582.7 426.4,585.1 426.8,583.7 427.1,583.3 427.5,583.9 427.9,583.2 428.3,586.3 428.7,583.8 429.1,583.7 429.5,583.4 429.9,584.8 430.3,582.7 430.7,583.9 431.1,584.1 431.4,583.7 431.8,583.4 432.2,583.7 432.6,586.9 433.0,583.2 433.4,584.1 433.8,583.0 434.2,583.9 434.6,584.2 435.0,585.2 435.4,582.8 435.7,585.2 436.1,583.5 436.5,583.6 436.9,582.8 437.3,584.2 437.7,583.5 438.1,583.6 438.5,584.7 438.9,587.3 439.3,584.4 439.7,582.9 440.0,583.5 440.4,585.5 440.8,584.3 441.2,582.9 441.6,583.7 442.0,584.1 442.4,584.1 442.8,584.3 443.2,583.1 443.6,583.8 444.0,584.0 444.3,583.6 444.7,584.3 445.1,585.1 445.5,583.9 445.9,583.3 446.3,584.7 446.7,584.1 447.1,583.5 447.5,584.0 447.9,583.7 448.3,584.0 448.6,582.4 449.0,583.5 449.4,583.3 449.8,583.2 450.2,584.6 450.6,583.7 451.0,584.4 451.4,584.1 451.8,583.5 452.2,583.7 452.5,584.3 452.9,583.4 453.3,582.6 453.7,583.0 454.1,583.5 454.5,583.1 454.9,584.3 455.3,584.0 455.7,583.7 456.1,583.0 456.5,583.7 456.8,583.0 457.2,583.4 457.6,583.7 458.0,583.7 458.4,583.4 458.8,581.7 459.2,584.6 459.6,582.9 460.0,583.0 460.4,583.2 460.8,583.9 461.1,583.8 461.5,584.6 461.9,583.8 462.3,583.3 462.7,583.3 463.1,584.4 463.5,582.7 463.9,584.0 464.3,583.2 464.7,583.3 465.1,583.4 465.4,583.7 465.8,582.4 466.2,583.1 466.6,583.8 467.0,583.9 467.4,584.8 467.8,584.4 468.2,584.4 468.6,582.3 469.0,583.0 469.4,584.4 469.7,584.7 470.1,583.1 470.5,584.4 470.9,583.8 471.3,584.3 471.7,584.2 472.1,583.8 472.5,583.2 472.9,584.7 473.3,583.1 473.7,582.6 474.0,583.8 474.4,583.7 474.8,583.4 475.2,584.1 475.6,584.5 476.0,583.6 476.4,583.4 476.8,585.4 477.2,583.4 477.6,583.4 478.0,583.4 478.3,583.8 478.7,583.5 479.1,584.1 479.5,584.8 479.9,583.7 480.3,584.9 480.7,584.1 481.1,583.6 481.5,583.6 481.9,582.9 482.2,584.2 482.6,584.2 483.0,584.4 483.4,583.7 483.8,584.3 484.2,584.1 484.6,584.3 485.0,584.0 485.4,583.8 485.8,583.3 486.2,582.8 486.5,583.2 486.9,583.3 487.3,583.6 487.7,583.6 488.1,584.3 488.5,583.5 488.9,582.7 489.3,584.2 489.7,583.8 490.1,582.8 490.5,583.8 490.8,583.4 491.2,584.0 491.6,580.3 492.0,582.5 492.4,583.6 492.8,584.2 493.2,583.2 493.6,583.8 494.0,582.7 494.4,583.8 494.8,583.2 495.1,584.5 495.5,582.8 495.9,583.9 496.3,584.4 496.7,583.5 497.1,583.3 497.5,583.7 497.9,583.5 498.3,583.2 498.7,585.2 499.1,583.2 499.4,583.4 499.8,583.1 500.2,584.9 500.6,583.6 501.0,583.9 501.4,583.3 501.8,583.8 502.2,583.1 502.6,583.4 503.0,583.8 503.4,584.0 503.7,584.9 504.1,584.9 504.5,583.4 504.9,582.6 505.3,583.0 505.7,583.6 506.1,583.9 506.5,583.7 506.9,583.8 507.3,583.4 507.7,584.7 508.0,583.9 508.4,582.3 508.8,582.7 509.2,584.7 509.6,583.7 510.0,584.6 510.4,583.7 510.8,584.2 511.2,583.0 511.6,583.5 512.0,582.9 512.3,584.2 512.7,584.1 513.1,582.5 513.5,584.8 513.9,584.0 514.3,583.4 514.7,583.6 515.1,583.0 515.5,582.7 515.9,584.1 516.2,583.3 516.6,584.3 517.0,584.7 517.4,584.3 517.8,583.9 518.2,583.8 518.6,583.7 519.0,583.9 519.4,583.0 519.8,583.2 520.2,583.4 520.5,583.8 520.9,583.5 521.3,584.0 521.7,584.6 522.1,583.1 522.5,583.6 522.9,583.6 523.3,583.8 523.7,583.1 524.1,585.1 524.5,585.1 524.8,584.1 525.2,583.8 525.6,583.9 526.0,584.2 526.4,582.2 526.8,584.0 527.2,583.5 527.6,584.0 528.0,584.1 528.4,584.0 528.8,583.8 529.1,583.0 529.5,582.8 529.9,582.8 530.3,583.8 530.7,584.9 531.1,583.9 531.5,583.1 531.9,583.7 532.3,583.1 532.7,583.2 533.1,584.8 533.4,584.1 533.8,584.1 534.2,583.1 534.6,583.9 535.0,583.0 535.4,584.4 535.8,584.9 536.2,583.5 536.6,583.7 537.0,584.1 537.4,584.2 537.7,583.0 538.1,584.1 538.5,583.3 538.9,584.4 539.3,583.1 539.7,583.4 540.1,584.4 540.5,583.7 540.9,585.3 541.3,582.9 541.7,584.1 542.0,583.3 542.4,582.9 542.8,582.8 543.2,581.9 543.6,583.6 544.0,581.2 544.4,584.0 544.8,582.3 545.2,583.1 545.6,584.1 546.0,584.6 546.3,583.2 546.7,583.6 547.1,584.4 547.5,582.8 547.9,583.6 548.3,583.4 548.7,584.5 549.1,583.8 549.5,583.8 549.9,584.4 550.2,583.4 550.6,584.1 551.0,583.9 551.4,584.1 551.8,583.5 552.2,584.0 552.6,582.9 553.0,583.9 553.4,582.9 553.8,583.3 554.2,585.5 554.5,583.2 554.9,584.1 555.3,583.1 555.7,583.6 556.1,584.2 556.5,582.6 556.9,583.0 557.3,583.1 557.7,583.0 558.1,583.7 558.5,583.5 558.8,583.5 559.2,584.2 559.6,584.2 560.0,583.8 560.4,583.7 560.8,584.1 561.2,585.2 561.6,583.5 562.0,583.5 562.4,585.7 562.8,583.7 563.1,583.2 563.5,584.4 563.9,583.2 564.3,583.7 564.7,584.2 565.1,584.1 565.5,582.9 565.9,586.7 566.3,584.4 566.7,583.4 567.1,584.8 567.4,583.4 567.8,583.4 568.2,583.9 568.6,583.9 569.0,583.8 569.4,584.1 569.8,583.4 570.2,581.8 570.6,583.6 571.0,583.7 571.4,584.6 571.7,584.1 572.1,583.6 572.5,585.1 572.9,583.7 573.3,583.3 573.7,584.2 574.1,584.3 574.5,584.8 574.9,584.7 575.3,585.4 575.7,582.7 576.0,583.4 576.4,582.5 576.8,584.3 577.2,583.4 577.6,584.7 578.0,584.2 578.4,583.8 578.8,583.1 579.2,584.4 579.6,583.2 579.9,584.3 580.3,583.7 580.7,584.6 581.1,582.8 581.5,584.2 581.9,584.0 582.3,584.1 582.7,584.1 583.1,583.4 583.5,584.6 583.9,585.0 584.2,584.3 584.6,584.0 585.0,582.2 585.4,583.5 585.8,582.4 586.2,584.1 586.6,583.3 587.0,583.5 587.4,583.5 587.8,582.7 588.2,583.6 588.5,583.8 588.9,584.7 589.3,584.0 589.7,583.2 590.1,583.5 590.5,583.7 590.9,584.6 591.3,583.8 591.7,584.4 592.1,584.2 592.5,585.0 592.8,584.5 593.2,584.3 593.6,580.7 594.0,583.4 594.4,583.0 594.8,583.6 595.2,584.6 595.6,584.5 596.0,583.3 596.4,584.2 596.8,584.5 597.1,585.1 597.5,585.0 597.9,585.1 598.3,582.8 598.7,584.0 599.1,583.0 599.5,583.6 599.9,583.8 600.3,583.7 600.7,583.6 601.1,583.9 601.4,584.0 601.8,583.7 602.2,583.8 602.6,583.8 603.0,583.6 603.4,582.4 603.8,583.0 604.2,583.3 604.6,583.4 605.0,584.8 605.4,583.2 605.7,584.3 606.1,583.6 606.5,583.9 606.9,583.2 607.3,584.0 607.7,583.5 608.1,595.5 608.5,571.2 608.9,582.2 609.3,597.6 609.7,574.6 610.0,578.0 610.4,597.1 610.8,579.5 611.2,574.8 611.6,597.2 612.0,582.6 612.4,572.3 612.8,593.9 613.2,586.4 613.6,570.4 613.9,591.3 614.3,592.3 614.7,569.7 615.1,587.0 615.5,595.2 615.9,572.4 616.3,581.2 616.7,598.3 617.1,574.0 617.5,577.6 617.9,597.2 618.2,581.0 618.6,575.8 619.0,597.5 619.4,585.4 619.8,570.8 620.2,594.3 620.6,586.0 621.0,570.0 621.4,590.4 621.8,593.0 622.2,570.7 622.5,586.0 622.9,597.9 623.3,571.9 623.7,580.9 624.1,598.3 624.5,575.5 624.9,576.0 625.3,598.4 625.7,580.6 626.1,572.3 626.5,597.2 626.8,585.4 627.2,569.6 627.6,595.5 628.0,590.2 628.4,570.2 628.8,590.1 629.2,593.9 629.6,570.2 630.0,583.9 630.4,596.5 630.8,572.8 631.1,579.6 631.5,597.1 631.9,577.1 632.3,576.5 632.7,598.8 633.1,581.5 633.5,571.5 633.9,595.9 634.3,586.3 634.7,570.3 635.1,592.0 635.4,591.0 635.8,570.2 636.2,587.2 636.6,595.7 637.0,570.6 637.4,584.7 637.8,595.2 638.2,575.8 638.6,578.3 639.0,598.8 639.4,577.6 639.7,575.3 640.1,596.2 640.5,582.3 640.9,571.5 641.3,596.1 641.7,587.3 642.1,570.1 642.5,590.5 642.9,592.2 643.3,570.0 643.6,586.5 644.0,595.3 644.4,571.2 644.8,581.8 645.2,598.1 645.6,573.4 646.0,576.5 646.4,598.5 646.8,578.1 647.2,574.0 647.6,598.1 647.9,582.7 648.3,569.9 648.7,595.3 649.1,587.4 649.5,570.4 649.9,592.4 650.3,592.3 650.7,569.4 651.1,586.9 651.5,596.4 651.9,571.8 652.2,581.7 652.6,594.1 653.0,574.8 653.4,577.1 653.8,596.9 654.2,579.9 654.6,574.1 655.0,595.6 655.4,585.4 655.8,571.4 656.2,592.9 656.5,589.2 656.9,570.0 657.3,589.8 657.7,592.8 658.1,570.2 658.5,586.5 658.9,595.3 659.3,572.4 659.7,580.1 660.1,597.5 660.5,578.2 660.8,576.9 661.2,596.3 661.6,580.7 662.0,573.0 662.4,595.1 662.8,585.0 663.2,570.5 663.6,591.5 664.0,589.8 664.4,570.4 664.8,589.5 665.1,594.3 665.5,570.7 665.9,584.2 666.3,596.9 666.7,572.6 667.1,580.0 667.5,598.7 667.9,576.8 668.3,576.7 668.7,598.4 669.1,581.8 669.4,572.5 669.8,596.6 670.2,585.8 670.6,569.0 671.0,592.7 671.4,591.3 671.8,568.4 672.2,588.1 672.6,594.6 673.0,571.2 673.4,583.3 673.7,597.4 674.1,573.7 674.5,578.8 674.9,597.9 675.3,577.3 675.7,573.5 676.1,597.6 676.5,583.2 676.9,570.5 677.3,595.2 677.6,583.8 678.0,570.9 678.4,591.5 678.8,591.7 679.2,570.4 679.6,586.9 680.0,595.4 680.4,573.0 680.8,582.2 681.2,596.4 681.6,576.1 681.9,578.5 682.3,597.1 682.7,579.9 683.1,571.8 683.5,596.6 683.9,582.4 684.3,572.4 684.7,592.8 685.1,589.3 685.5,571.5 685.9,591.0 686.2,592.4 686.6,570.4 687.0,585.6 687.4,594.9 687.8,572.0 688.2,581.3 688.6,597.9 689.0,576.3 689.4,575.9 689.8,596.9 690.2,580.2 690.5,572.0 690.9,597.8 691.3,585.4 691.7,569.2 692.1,593.2 692.5,588.8 692.9,569.2 693.3,590.4 693.7,593.3 694.1,570.3 694.5,585.1 694.8,597.5 695.2,572.6 695.6,581.1 696.0,598.9 696.4,576.2 696.8,576.6 697.2,598.3 697.6,581.5 698.0,572.8 698.4,596.3 698.8,585.7 699.1,570.6 699.5,593.3 699.9,590.3 700.3,570.5 700.7,589.4 701.1,593.8 701.5,571.9 701.9,584.2 702.3,595.7 702.7,574.1 703.1,580.2 703.4,597.5 703.8,579.4 704.2,574.9 704.6,597.3 705.0,581.5 705.4,571.8 705.8,593.6 706.2,587.0 706.6,571.0 707.0,592.0 707.4,589.6 707.7,570.6 708.1,587.4 708.5,594.8 708.9,570.4 709.3,584.4 709.7,597.2 710.1,573.7 710.5,578.2 710.9,598.4 711.3,578.3 711.6,574.0 712.0,597.7 712.4,582.9 712.8,571.1 713.2,596.2 713.6,589.1 714.0,569.8 714.4,591.6 714.8,592.2 715.2,568.9 715.6,586.5 715.9,596.8 716.3,571.7 716.7,582.4 717.1,598.7 717.5,573.9 717.9,577.3 718.3,597.8 718.7,578.4 719.1,574.9 719.5,595.8 719.9,583.6 720.2,570.6 720.6,593.5 721.0,587.9 721.4,571.4 721.8,590.6 722.2,591.1 722.6,570.1 723.0,585.4 723.4,594.9 723.8,572.4 724.2,580.9 724.5,596.1 724.9,576.3 725.3,577.4 725.7,597.0 726.1,579.6 726.5,574.5 726.9,594.8 727.3,584.3 727.7,571.1 728.1,592.9 728.5,589.5 728.8,571.5 729.2,589.5 729.6,592.0 730.0,571.8 730.4,584.6 730.8,596.0 731.2,572.2 731.6,579.5 732.0,595.8 732.4,576.3 732.8,576.9 733.1,597.1 733.5,581.0 733.9,572.4 734.3,597.0 734.7,585.6 735.1,569.4 735.5,592.1 735.9,589.1 736.3,569.3 736.7,589.3 737.1,594.1 737.4,569.9 737.8,584.4 738.2,596.8 738.6,573.3 739.0,579.5 739.4,598.1 739.8,577.5 740.2,575.5 740.6,597.4 741.0,580.5 741.4,571.7 741.7,594.6 742.1,586.8 742.5,570.7 742.9,590.3 743.3,590.2 743.7,569.5 744.1,588.0 744.5,593.0 744.9,572.3 745.3,583.4 745.6,596.1 746.0,574.3 746.4,578.7 746.8,597.6 747.2,578.2 747.6,574.9 748.0,596.2 748.4,582.8 748.8,570.9 749.2,594.5 749.6,591.4 749.9,569.1 750.3,590.9 750.7,590.9 751.1,570.0 751.5,586.3 751.9,594.9 752.3,571.5 752.7,581.9 753.1,596.8 753.5,574.9 753.9,577.9 754.2,599.4 754.6,578.7 755.0,573.8 755.4,597.5 755.8,584.6 756.2,570.5 756.6,595.3 757.0,588.5 757.4,568.6 757.8,591.0 758.2,593.8 758.5,570.6 758.9,586.4 759.3,595.0 759.7,571.8 760.1,581.7 760.5,596.7 760.9,573.4 761.3,576.4 761.7,597.7 762.1,579.6 762.5,573.2 762.8,597.4 763.2,584.9 763.6,569.3 764.0,592.6 764.4,590.0 764.8,569.6 765.2,589.2 765.6,591.7 766.0,571.6 766.4,584.9 766.8,596.6 767.1,574.2 767.5,581.0 767.9,596.8 768.3,575.5 768.7,576.5 769.1,595.7 769.5,581.3 769.9,572.3 770.3,596.4 770.7,586.9 771.1,571.3 771.4,592.8 771.8,589.7 772.2,571.3 772.6,588.6 773.0,595.1 773.4,571.8 773.8,584.0 774.2,596.1 774.6,572.9 775.0,578.9 775.3,597.6 775.7,576.8 776.1,575.4 776.5,597.8 776.9,582.0 777.3,571.8 777.7,595.9 778.1,585.8 778.5,569.3 778.9,592.2 779.3,590.4 779.6,569.4 780.0,588.6 780.4,594.8 780.8,571.5 781.2,583.6 781.6,597.9 782.0,574.3 782.4,578.5 782.8,598.5 783.2,578.3 783.6,574.1 783.9,596.8 784.3,582.9 784.7,568.3 785.1,595.2 785.5,588.4 785.9,569.1 786.3,590.5 786.7,592.3 787.1,571.2 787.5,587.6 787.9,594.7 788.2,572.2 788.6,582.0 789.0,596.5 789.4,575.5 789.8,577.1 790.2,597.7 790.6,579.2 791.0,573.9 791.4,595.7 791.8,584.0 792.2,571.6 792.5,593.5 792.9,588.6 793.3,570.5 793.7,590.5 794.1,593.2 794.5,570.2 794.9,585.6 795.3,596.2 795.7,573.5 796.1,582.3 796.5,597.3 796.8,576.3 797.2,575.9 797.6,598.3 798.0,579.4 798.4,572.9 798.8,596.9 799.2,585.9 799.6,569.2 800.0,593.5 800.4,588.7 800.8,569.2 801.1,589.5 801.5,595.8 801.9,570.5 802.3,584.5 802.7,597.1 803.1,573.1 803.5,578.8 803.9,599.2 804.3,576.7 804.7,574.5 805.1,598.5 805.4,580.4 805.8,572.0 806.2,595.9 806.6,586.0 807.0,569.9 807.4,592.7 807.8,590.0 808.2,569.4 808.6,589.5 809.0,595.3 809.3,585.2 809.7,584.5 810.1,584.2 810.5,583.2 810.9,584.1 811.3,583.9 811.7,584.4 812.1,584.4 812.5,583.9 812.9,583.3 813.3,581.9 813.6,584.2 814.0,584.0 814.4,584.4 814.8,582.9 815.2,583.7 815.6,584.8 816.0,584.9 816.4,582.8 816.8,584.8 817.2,585.0 817.6,584.6 817.9,584.5 818.3,584.1 818.7,586.9 819.1,583.8 819.5,583.4 819.9,583.8 820.3,583.0 820.7,585.0 821.1,584.3 821.5,583.5 821.9,584.7 822.2,583.7 822.6,583.1 823.0,583.5 823.4,583.6 823.8,583.3 824.2,584.0 824.6,583.1 825.0,583.9 825.4,584.8 825.8,583.6 826.2,582.5 826.5,583.9 826.9,584.1 827.3,584.4 827.7,584.6 828.1,583.3 828.5,582.9 828.9,582.7 829.3,583.6 829.7,583.7 830.1,583.9 830.5,583.9 830.8,584.0 831.2,583.2 831.6,583.4 832.0,584.9 832.4,584.0 832.8,583.2 833.2,584.7 833.6,582.1 834.0,583.5 834.4,584.2 834.8,584.9 835.1,583.7 835.5,583.3 835.9,583.9 836.3,584.0 836.7,583.1 837.1,584.4 837.5,583.8 837.9,584.1 838.3,583.8 838.7,583.6 839.1,583.8 839.4,584.3 839.8,583.9 840.2,584.1 840.6,583.2 841.0,583.8 841.4,587.7 841.8,582.9 842.2,582.4 842.6,583.8 843.0,583.8 843.3,580.8 843.7,583.7 844.1,584.2 844.5,582.5 844.9,583.5 845.3,583.5 845.7,582.7 846.1,584.4 846.5,584.0 846.9,584.2 847.3,584.0 847.6,584.0 848.0,584.5 848.4,584.5 848.8,583.7 849.2,583.5 849.6,584.1 850.0,580.9 850.4,583.7 850.8,583.8 851.2,583.3 851.6,584.0 851.9,584.1 852.3,584.6 852.7,583.1 853.1,583.6 853.5,584.9 853.9,582.1 854.3,583.4 854.7,582.6 855.1,583.1 855.5,583.9 855.9,584.1 856.2,583.5 856.6,583.4 857.0,583.3 857.4,583.2 857.8,583.6 858.2,583.7 858.6,583.2 859.0,583.4 859.4,586.5 859.8,583.1 860.2,582.4 860.5,584.4 860.9,580.0 861.3,584.2 861.7,581.9 862.1,585.1 862.5,583.6 862.9,583.9 863.3,581.9 863.7,586.7 864.1,583.0 864.5,584.5 864.8,583.4 865.2,582.9 865.6,583.4 866.0,584.8 866.4,584.2 866.8,587.4 867.2,582.8 867.6,583.7 868.0,583.2 868.4,583.8 868.8,583.2 869.1,584.2 869.5,583.0 869.9,582.9 870.3,584.7 870.7,583.7 871.1,584.2 871.5,583.5 871.9,582.8 872.3,582.3 872.7,584.1 873.0,583.4 873.4,582.8 873.8,583.7 874.2,583.5 874.6,583.9 875.0,584.7 875.4,582.5 875.8,586.3 876.2,584.4 876.6,584.2 877.0,583.9 877.3,583.5 877.7,583.9 878.1,583.2 878.5,582.1 878.9,583.9 879.3,583.8 879.7,583.7" fill="none" stroke="#ff1010" stroke-width="1.3" shape-rendering="crispEdges" stroke-linejoin="bevel"/>
<polyline points="106.3,579.4 106.7,579.8 107.1,579.5 107.5,579.1 107.9,580.9 108.3,579.7 108.6,579.4 109.0,578.9 109.4,579.8 109.8,580.3 110.2,579.5 110.6,578.8 111.0,580.2 111.4,579.1 111.8,579.5 112.2,580.1 112.6,580.0 112.9,579.5 113.3,581.4 113.7,579.0 114.1,579.4 114.5,579.3 114.9,579.3 115.3,580.9 115.7,578.6 116.1,579.3 116.5,580.0 116.9,580.1 117.2,580.0 117.6,580.9 118.0,579.3 118.4,577.9 118.8,579.9 119.2,580.0 119.6,579.0 120.0,579.6 120.4,579.6 120.8,580.5 121.2,578.1 121.5,580.3 121.9,579.0 122.3,579.3 122.7,580.4 123.1,579.2 123.5,579.0 123.9,580.4 124.3,578.7 124.7,579.7 125.1,579.0 125.4,579.7 125.8,580.0 126.2,578.4 126.6,578.9 127.0,580.0 127.4,579.5 127.8,580.3 128.2,579.0 128.6,580.0 129.0,579.7 129.4,578.9 129.7,580.0 130.1,580.3 130.5,580.9 130.9,579.8 131.3,580.1 131.7,579.5 132.1,579.6 132.5,579.5 132.9,579.4 133.3,579.8 133.7,579.8 134.0,579.9 134.4,580.0 134.8,579.3 135.2,579.1 135.6,580.0 136.0,579.1 136.4,580.0 136.8,581.8 137.2,579.5 137.6,579.4 138.0,578.1 138.3,578.3 138.7,579.9 139.1,580.5 139.5,579.9 139.9,578.5 140.3,579.6 140.7,580.0 141.1,579.5 141.5,579.8 141.9,579.8 142.3,580.3 142.6,580.2 143.0,579.7 143.4,579.7 143.8,580.5 144.2,579.8 144.6,578.4 145.0,577.3 145.4,579.6 145.8,579.8 146.2,577.1 146.6,580.1 146.9,577.3 147.3,579.4 147.7,580.0 148.1,580.0 148.5,578.8 148.9,580.4 149.3,580.5 149.7,578.7 150.1,579.2 150.5,583.1 150.9,579.6 151.2,581.7 151.6,579.7 152.0,579.7 152.4,580.2 152.8,580.1 153.2,579.7 153.6,580.6 154.0,579.3 154.4,579.7 154.8,580.6 155.2,579.8 155.5,580.0 155.9,579.6 156.3,579.5 156.7,578.8 157.1,579.8 157.5,580.4 157.9,579.7 158.3,579.1 158.7,579.3 159.1,576.2 159.4,579.4 159.8,579.0 160.2,579.5 160.6,578.3 161.0,580.9 161.4,580.4 161.8,579.4 162.2,579.9 162.6,580.1 163.0,579.2 163.4,579.4 163.7,579.0 164.1,580.5 164.5,580.4 164.9,578.9 165.3,580.1 165.7,579.0 166.1,580.5 166.5,580.5 166.9,578.9 167.3,579.5 167.7,579.2 168.0,579.8 168.4,580.1 168.8,580.2 169.2,578.9 169.6,582.4 170.0,578.2 170.4,579.3 170.8,579.5 171.2,576.9 171.6,579.7 172.0,578.9 172.3,579.2 172.7,580.3 173.1,579.4 173.5,577.8 173.9,580.5 174.3,578.5 174.7,580.3 175.1,579.3 175.5,579.8 175.9,579.8 176.3,578.8 176.6,579.7 177.0,580.1 177.4,579.2 177.8,579.7 178.2,578.5 178.6,580.8 179.0,579.6 179.4,578.6 179.8,580.7 180.2,579.1 180.6,580.1 180.9,580.0 181.3,579.6 181.7,580.9 182.1,579.4 182.5,579.0 182.9,578.6 183.3,580.6 183.7,578.8 184.1,580.2 184.5,579.9 184.9,579.7 185.2,579.7 185.6,579.2 186.0,580.5 186.4,578.9 186.8,579.2 187.2,580.3 187.6,579.7 188.0,581.4 188.4,580.9 188.8,579.4 189.1,580.5 189.5,579.5 189.9,579.1 190.3,579.4 190.7,577.8 191.1,579.3 191.5,579.5 191.9,580.6 192.3,580.2 192.7,580.3 193.1,580.2 193.4,579.3 193.8,579.4 194.2,578.8 194.6,578.7 195.0,580.2 195.4,579.3 195.8,580.9 196.2,579.9 196.6,580.3 197.0,581.0 197.4,580.3 197.7,579.8 198.1,579.4 198.5,578.4 198.9,580.2 199.3,580.6 199.7,579.0 200.1,579.6 200.5,579.4 200.9,580.3 201.3,578.8 201.7,579.6 202.0,580.0 202.4,580.7 202.8,580.4 203.2,580.1 203.6,580.7 204.0,580.0 204.4,580.1 204.8,579.6 205.2,579.4 205.6,579.1 206.0,578.6 206.3,579.8 206.7,580.0 207.1,580.3 207.5,579.2 207.9,580.8 208.3,578.1 208.7,580.4 209.1,578.8 209.5,579.5 209.9,579.4 210.3,579.8 210.6,581.3 211.0,580.4 211.4,580.2 211.8,579.3 212.2,592.1 212.6,571.0 213.0,575.3 213.4,593.4 213.8,574.9 214.2,572.3 214.6,592.4 214.9,579.0 215.3,569.1 215.7,588.1 216.1,583.5 216.5,566.7 216.9,586.9 217.3,586.6 217.7,566.4 218.1,583.7 218.5,591.2 218.9,567.8 219.2,578.2 219.6,593.9 220.0,571.1 220.4,573.0 220.8,594.2 221.2,575.2 221.6,569.8 222.0,593.8 222.4,579.7 222.8,567.1 223.1,590.4 223.5,584.6 223.9,565.7 224.3,586.7 224.7,588.5 225.1,565.4 225.5,582.6 225.9,590.7 226.3,569.4 226.7,576.9 227.1,592.8 227.4,572.4 227.8,573.9 228.2,593.9 228.6,576.7 229.0,569.2 229.4,590.8 229.8,580.2 230.2,567.3 230.6,588.0 231.0,585.6 231.4,566.8 231.7,584.0 232.1,585.7 232.5,568.1 232.9,580.2 233.3,589.6 233.7,568.0 234.1,576.9 234.5,592.1 234.9,570.3 235.3,573.5 235.7,591.7 236.0,576.2 236.4,568.6 236.8,589.8 237.2,582.5 237.6,568.5 238.0,587.9 238.4,586.7 238.8,566.8 239.2,583.7 239.6,589.5 240.0,567.6 240.3,579.5 240.7,591.4 241.1,569.0 241.5,575.3 241.9,593.4 242.3,572.8 242.7,570.7 243.1,592.4 243.5,577.9 243.9,567.2 244.3,590.7 244.6,582.4 245.0,566.0 245.4,589.8 245.8,586.4 246.2,565.7 246.6,584.2 247.0,590.1 247.4,567.7 247.8,579.0 248.2,593.2 248.6,570.3 248.9,573.6 249.3,594.3 249.7,574.6 250.1,569.7 250.5,593.4 250.9,580.7 251.3,568.5 251.7,590.8 252.1,582.5 252.5,567.9 252.9,587.2 253.2,587.6 253.6,567.1 254.0,583.1 254.4,590.4 254.8,568.6 255.2,579.0 255.6,591.7 256.0,572.0 256.4,575.2 256.8,591.1 257.1,574.3 257.5,572.0 257.9,592.2 258.3,579.9 258.7,568.5 259.1,589.2 259.5,583.7 259.9,567.2 260.3,585.3 260.7,588.2 261.1,566.8 261.4,580.6 261.8,591.3 262.2,569.0 262.6,577.2 263.0,592.4 263.4,572.2 263.8,572.0 264.2,594.0 264.6,576.2 265.0,570.4 265.4,591.8 265.7,580.8 266.1,565.9 266.5,588.6 266.9,585.7 267.3,566.1 267.7,586.0 268.1,589.4 268.5,566.9 268.9,581.2 269.3,592.5 269.7,568.5 270.0,575.4 270.4,593.4 270.8,571.9 271.2,572.1 271.6,593.0 272.0,577.1 272.4,568.3 272.8,591.3 273.2,581.4 273.6,567.1 274.0,588.2 274.3,585.5 274.7,567.1 275.1,584.4 275.5,590.5 275.9,568.9 276.3,579.8 276.7,591.5 277.1,571.0 277.5,574.5 277.9,592.3 278.3,573.4 278.6,572.3 279.0,593.5 279.4,578.7 279.8,568.1 280.2,590.6 280.6,583.4 281.0,566.6 281.4,586.5 281.8,587.4 282.2,566.9 282.6,582.6 282.9,590.0 283.3,568.3 283.7,578.7 284.1,591.7 284.5,571.3 284.9,574.9 285.3,591.5 285.7,573.2 286.1,570.5 286.5,593.4 286.8,579.0 287.2,567.8 287.6,591.5 288.0,584.6 288.4,566.2 288.8,586.9 289.2,588.2 289.6,566.0 290.0,581.7 290.4,590.5 290.8,567.9 291.1,577.4 291.5,594.4 291.9,570.3 292.3,573.7 292.7,593.3 293.1,575.0 293.5,569.3 293.9,592.2 294.3,579.6 294.7,569.3 295.1,590.6 295.4,583.9 295.8,566.8 296.2,585.9 296.6,589.0 297.0,567.8 297.4,581.6 297.8,590.3 298.2,569.5 298.6,577.1 299.0,592.5 299.4,572.5 299.7,573.4 300.1,590.3 300.5,577.4 300.9,570.1 301.3,590.6 301.7,581.4 302.1,568.8 302.5,588.6 302.9,584.5 303.3,567.5 303.7,584.3 304.0,587.7 304.4,568.7 304.8,580.0 305.2,592.3 305.6,568.8 306.0,575.8 306.4,592.7 306.8,571.8 307.2,573.1 307.6,592.6 308.0,577.6 308.3,569.2 308.7,591.6 309.1,582.2 309.5,567.2 309.9,589.4 310.3,586.9 310.7,568.0 311.1,585.6 311.5,589.9 311.9,567.5 312.3,580.6 312.6,591.8 313.0,569.8 313.4,575.0 313.8,593.6 314.2,574.6 314.6,572.0 315.0,593.5 315.4,578.5 315.8,568.1 316.2,591.7 316.6,583.7 316.9,566.4 317.3,587.5 317.7,587.1 318.1,567.9 318.5,583.0 318.9,589.4 319.3,568.1 319.7,579.2 320.1,592.9 320.5,570.6 320.8,574.3 321.2,592.9 321.6,575.2 322.0,572.5 322.4,591.7 322.8,578.8 323.2,569.2 323.6,590.3 324.0,582.9 324.4,567.5 324.8,585.4 325.1,586.9 325.5,567.1 325.9,582.9 326.3,589.2 326.7,570.1 327.1,578.4 327.5,592.3 327.9,571.6 328.3,574.7 328.7,592.0 329.1,575.5 329.4,569.3 329.8,592.2 330.2,579.2 330.6,566.9 331.0,589.5 331.4,583.3 331.8,566.2 332.2,585.8 332.6,589.6 333.0,566.8 333.4,581.7 333.7,592.4 334.1,568.4 334.5,577.3 334.9,593.9 335.3,571.5 335.7,572.2 336.1,593.8 336.5,575.7 336.9,568.8 337.3,592.5 337.7,580.9 338.0,565.9 338.4,589.1 338.8,585.7 339.2,565.9 339.6,586.7 340.0,590.0 340.4,566.2 340.8,579.7 341.2,591.7 341.6,570.4 342.0,575.7 342.3,592.6 342.7,572.1 343.1,573.8 343.5,593.3 343.9,577.7 344.3,568.7 344.7,592.0 345.1,582.5 345.5,566.4 345.9,588.0 346.3,586.2 346.6,566.5 347.0,583.6 347.4,590.3 347.8,567.8 348.2,578.6 348.6,590.2 349.0,569.8 349.4,575.0 349.8,592.5 350.2,574.9 350.6,571.7 350.9,593.2 351.3,578.3 351.7,568.2 352.1,590.1 352.5,582.9 352.9,567.0 353.3,586.5 353.7,587.3 354.1,566.9 354.5,584.0 354.8,590.9 355.2,568.0 355.6,577.4 356.0,592.1 356.4,571.9 356.8,574.1 357.2,593.6 357.6,574.2 358.0,570.6 358.4,592.8 358.8,578.6 359.1,567.4 359.5,589.9 359.9,583.4 360.3,566.8 360.7,587.1 361.1,589.3 361.5,566.8 361.9,581.4 362.3,591.4 362.7,571.5 363.1,577.5 363.4,592.8 363.8,572.9 364.2,574.4 364.6,593.5 365.0,576.2 365.4,569.9 365.8,594.7 366.2,580.2 366.6,568.0 367.0,588.8 367.4,583.4 367.7,569.2 368.1,585.2 368.5,588.8 368.9,568.5 369.3,582.4 369.7,593.3 370.1,572.1 370.5,576.1 370.9,592.8 371.3,571.7 371.7,574.1 372.0,594.0 372.4,573.8 372.8,570.1 373.2,591.8 373.6,581.7 374.0,568.0 374.4,589.5 374.8,585.7 375.2,565.8 375.6,585.3 376.0,589.5 376.3,571.0 376.7,580.8 377.1,591.8 377.5,568.8 377.9,576.4 378.3,593.3 378.7,572.3 379.1,570.5 379.5,593.4 379.9,578.4 380.3,566.6 380.6,592.3 381.0,582.2 381.4,566.7 381.8,589.6 382.2,586.0 382.6,565.9 383.0,584.0 383.4,589.7 383.8,567.9 384.2,579.9 384.5,591.8 384.9,570.1 385.3,575.5 385.7,593.1 386.1,573.8 386.5,571.4 386.9,592.3 387.3,578.4 387.7,567.8 388.1,590.5 388.5,582.0 388.8,565.5 389.2,587.6 389.6,587.9 390.0,567.1 390.4,583.9 390.8,590.0 391.2,568.8 391.6,579.3 392.0,592.6 392.4,572.6 392.8,572.6 393.1,592.2 393.5,574.3 393.9,571.4 394.3,593.9 394.7,579.1 395.1,570.5 395.5,590.5 395.9,583.4 396.3,565.4 396.7,586.2 397.1,588.3 397.4,568.4 397.8,582.0 398.2,591.3 398.6,569.5 399.0,578.8 399.4,594.4 399.8,570.5 400.2,572.1 400.6,593.5 401.0,576.0 401.4,569.9 401.7,592.2 402.1,579.2 402.5,568.1 402.9,590.4 403.3,584.3 403.7,565.9 404.1,585.5 404.5,589.3 404.9,566.9 405.3,580.3 405.7,591.0 406.0,568.4 406.4,576.8 406.8,593.1 407.2,573.2 407.6,572.5 408.0,592.7 408.4,577.2 408.8,569.9 409.2,590.4 409.6,581.0 410.0,567.6 410.3,588.7 410.7,585.4 411.1,566.8 411.5,584.7 411.9,588.2 412.3,567.1 412.7,581.0 413.1,579.6 413.5,579.5 413.9,579.9 414.3,578.8 414.6,579.9 415.0,580.7 415.4,579.9 415.8,579.3 416.2,579.2 416.6,581.3 417.0,578.0 417.4,579.1 417.8,579.5 418.2,579.3 418.5,579.5 418.9,578.8 419.3,581.3 419.7,577.4 420.1,580.0 420.5,579.4 420.9,579.6 421.3,578.6 421.7,579.7 422.1,580.8 422.5,579.0 422.8,579.9 423.2,579.8 423.6,580.1 424.0,580.5 424.4,579.7 424.8,580.3 425.2,580.0 425.6,579.7 426.0,578.9 426.4,580.4 426.8,580.6 427.1,578.8 427.5,580.4 427.9,579.2 428.3,581.0 428.7,579.9 429.1,579.9 429.5,579.9 429.9,580.8 430.3,579.6 430.7,580.1 431.1,579.7 431.4,579.7 431.8,580.4 432.2,579.9 432.6,579.0 433.0,580.8 433.4,580.1 433.8,579.8 434.2,581.0 434.6,579.3 435.0,583.3 435.4,579.4 435.7,578.4 436.1,578.6 436.5,579.7 436.9,578.6 437.3,580.1 437.7,581.0 438.1,579.4 438.5,579.5 438.9,578.6 439.3,582.4 439.7,580.5 440.0,580.2 440.4,580.1 440.8,580.4 441.2,580.2 441.6,576.7 442.0,579.6 442.4,580.0 442.8,579.3 443.2,580.4 443.6,580.1 444.0,579.5 444.3,579.6 444.7,580.3 445.1,579.3 445.5,580.1 445.9,580.3 446.3,578.9 446.7,579.2 447.1,579.6 447.5,579.2 447.9,579.9 448.3,579.8 448.6,580.4 449.0,579.1 449.4,578.8 449.8,578.7 450.2,580.8 450.6,580.8 451.0,580.8 451.4,579.6 451.8,579.5 452.2,579.0 452.5,579.1 452.9,579.5 453.3,580.9 453.7,580.0 454.1,580.0 454.5,580.0 454.9,579.5 455.3,579.4 455.7,579.6 456.1,579.6 456.5,578.9 456.8,578.7 457.2,580.2 457.6,578.8 458.0,579.5 458.4,578.7 458.8,579.1 459.2,579.6 459.6,579.7 460.0,577.2 460.4,579.8 460.8,579.8 461.1,579.7 461.5,579.5 461.9,579.4 462.3,579.1 462.7,579.5 463.1,579.5 463.5,581.0 463.9,579.6 464.3,579.6 464.7,580.2 465.1,580.6 465.4,578.7 465.8,580.7 466.2,580.2 466.6,579.2 467.0,579.9 467.4,577.0 467.8,578.7 468.2,579.6 468.6,578.8 469.0,578.9 469.4,579.2 469.7,580.8 470.1,580.3 470.5,579.5 470.9,580.3 471.3,580.7 471.7,580.1 472.1,578.8 472.5,580.5 472.9,579.4 473.3,580.2 473.7,579.5 474.0,579.3 474.4,580.2 474.8,579.5 475.2,579.2 475.6,578.4 476.0,579.6 476.4,580.1 476.8,580.9 477.2,577.8 477.6,580.8 478.0,578.7 478.3,579.4 478.7,579.4 479.1,580.1 479.5,579.9 479.9,579.1 480.3,580.6 480.7,580.1 481.1,580.9 481.5,580.2 481.9,579.4 482.2,579.7 482.6,579.6 483.0,579.8 483.4,580.0 483.8,579.6 484.2,579.0 484.6,579.2 485.0,579.9 485.4,579.5 485.8,579.2 486.2,579.2 486.5,579.4 486.9,579.5 487.3,579.5 487.7,580.0 488.1,579.4 488.5,579.8 488.9,580.6 489.3,580.0 489.7,580.0 490.1,578.9 490.5,578.9 490.8,580.2 491.2,579.3 491.6,580.4 492.0,580.7 492.4,580.2 492.8,579.2 493.2,580.1 493.6,580.2 494.0,579.8 494.4,578.7 494.8,579.1 495.1,578.6 495.5,578.5 495.9,579.9 496.3,579.5 496.7,580.0 497.1,579.3 497.5,579.4 497.9,579.0 498.3,579.9 498.7,579.4 499.1,580.3 499.4,580.4 499.8,580.4 500.2,578.4 500.6,579.8 501.0,580.4 501.4,580.8 501.8,580.9 502.2,579.7 502.6,579.9 503.0,580.1 503.4,580.0 503.7,580.1 504.1,580.1 504.5,579.9 504.9,580.5 505.3,580.0 505.7,580.4 506.1,579.0 506.5,579.7 506.9,580.2 507.3,578.9 507.7,580.2 508.0,580.2 508.4,579.2 508.8,579.2 509.2,579.5 509.6,580.2 510.0,579.2 510.4,579.4 510.8,579.7 511.2,579.8 511.6,578.8 512.0,579.2 512.3,579.1 512.7,579.5 513.1,579.6 513.5,580.8 513.9,578.9 514.3,579.8 514.7,580.6 515.1,580.0 515.5,578.7 515.9,579.0 516.2,580.1 516.6,580.3 517.0,580.4 517.4,579.3 517.8,579.1 518.2,579.8 518.6,580.0 519.0,578.6 519.4,580.0 519.8,580.0 520.2,580.2 520.5,580.6 520.9,579.6 521.3,579.9 521.7,580.3 522.1,579.8 522.5,577.9 522.9,579.3 523.3,579.9 523.7,579.5 524.1,579.3 524.5,578.7 524.8,579.8 525.2,579.8 525.6,579.7 526.0,580.5 526.4,580.1 526.8,579.1 527.2,580.8 527.6,580.2 528.0,579.9 528.4,578.2 528.8,580.1 529.1,580.2 529.5,579.1 529.9,578.8 530.3,578.6 530.7,579.7 531.1,579.1 531.5,579.7 531.9,580.4 532.3,579.9 532.7,578.9 533.1,580.0 533.4,579.3 533.8,579.7 534.2,579.5 534.6,580.3 535.0,578.8 535.4,579.7 535.8,579.5 536.2,578.3 536.6,580.6 537.0,579.6 537.4,580.7 537.7,581.2 538.1,580.5 538.5,579.1 538.9,579.1 539.3,578.5 539.7,579.7 540.1,579.1 540.5,579.4 540.9,580.3 541.3,580.0 541.7,580.2 542.0,579.8 542.4,579.6 542.8,578.8 543.2,580.6 543.6,579.7 544.0,578.9 544.4,580.5 544.8,579.8 545.2,579.1 545.6,580.3 546.0,580.3 546.3,580.2 546.7,579.7 547.1,579.8 547.5,578.6 547.9,579.4 548.3,579.3 548.7,579.7 549.1,576.8 549.5,579.4 549.9,578.7 550.2,580.3 550.6,580.0 551.0,579.4 551.4,578.9 551.8,579.2 552.2,580.4 552.6,578.8 553.0,579.9 553.4,579.0 553.8,578.8 554.2,578.9 554.5,579.3 554.9,579.3 555.3,579.5 555.7,579.6 556.1,580.2 556.5,578.8 556.9,579.3 557.3,579.4 557.7,577.9 558.1,579.9 558.5,578.1 558.8,580.3 559.2,579.5 559.6,579.5 560.0,579.4 560.4,579.3 560.8,578.9 561.2,580.3 561.6,580.9 562.0,578.7 562.4,580.4 562.8,579.6 563.1,579.5 563.5,579.5 563.9,580.3 564.3,579.8 564.7,580.7 565.1,579.6 565.5,581.4 565.9,579.1 566.3,579.3 566.7,580.1 567.1,579.5 567.4,579.4 567.8,579.2 568.2,579.3 568.6,580.3 569.0,579.5 569.4,579.5 569.8,579.4 570.2,579.8 570.6,580.8 571.0,579.6 571.4,580.1 571.7,580.9 572.1,581.1 572.5,579.8 572.9,579.0 573.3,579.6 573.7,580.3 574.1,580.3 574.5,577.0 574.9,579.5 575.3,579.4 575.7,579.8 576.0,580.1 576.4,576.6 576.8,579.7 577.2,579.7 577.6,578.7 578.0,579.2 578.4,579.4 578.8,579.1 579.2,578.6 579.6,579.9 579.9,580.5 580.3,578.5 580.7,578.9 581.1,579.9 581.5,579.6 581.9,580.2 582.3,580.0 582.7,579.8 583.1,579.3 583.5,580.5 583.9,579.2 584.2,579.1 584.6,580.0 585.0,580.4 585.4,580.0 585.8,579.6 586.2,580.5 586.6,580.1 587.0,579.6 587.4,579.2 587.8,580.4 588.2,580.2 588.5,580.2 588.9,580.0 589.3,580.4 589.7,578.1 590.1,580.1 590.5,579.2 590.9,579.7 591.3,581.1 591.7,578.8 592.1,579.8 592.5,579.7 592.8,578.7 593.2,580.3 593.6,579.0 594.0,580.4 594.4,578.9 594.8,580.7 595.2,581.2 595.6,579.3 596.0,580.2 596.4,579.9 596.8,581.9 597.1,579.2 597.5,579.2 597.9,580.6 598.3,579.0 598.7,579.2 599.1,579.4 599.5,579.2 599.9,579.7 600.3,578.3 600.7,579.9 601.1,579.7 601.4,579.1 601.8,579.0 602.2,580.7 602.6,580.2 603.0,580.1 603.4,580.1 603.8,579.0 604.2,579.7 604.6,578.5 605.0,580.9 605.4,579.7 605.7,579.8 606.1,579.6 606.5,580.1 606.9,579.7 607.3,580.6 607.7,579.9 608.1,571.5 608.5,573.9 608.9,594.1 609.3,576.4 609.7,569.8 610.0,591.2 610.4,580.6 610.8,569.3 611.2,589.0 611.6,585.3 612.0,566.9 612.4,584.6 612.8,588.1 613.2,567.7 613.6,581.2 613.9,590.4 614.3,568.7 614.7,578.0 615.1,592.1 615.5,570.8 615.9,573.4 616.3,592.3 616.7,576.6 617.1,570.2 617.5,592.0 617.9,579.5 618.2,567.5 618.6,587.5 619.0,585.6 619.4,567.1 619.8,584.4 620.2,588.8 620.6,567.0 621.0,581.3 621.4,591.5 621.8,568.7 622.2,576.1 622.5,594.5 622.9,572.1 623.3,570.5 623.7,593.9 624.1,577.6 624.5,568.8 624.9,592.8 625.3,581.9 625.7,565.4 626.1,589.4 626.5,587.0 626.8,566.7 627.2,584.9 627.6,590.1 628.0,567.3 628.4,579.0 628.8,592.8 629.2,570.6 629.6,574.0 630.0,592.9 630.4,573.5 630.8,572.7 631.1,592.0 631.5,578.9 631.9,569.3 632.3,590.7 632.7,582.3 633.1,567.4 633.5,587.2 633.9,586.2 634.3,568.1 634.7,582.3 635.1,591.5 635.4,568.6 635.8,578.3 636.2,591.3 636.6,570.7 637.0,574.6 637.4,592.8 637.8,576.7 638.2,571.6 638.6,590.6 639.0,578.6 639.4,568.0 639.7,589.4 640.1,583.4 640.5,568.4 640.9,586.2 641.3,588.8 641.7,566.7 642.1,581.6 642.5,592.1 642.9,568.5 643.3,577.2 643.6,592.5 644.0,573.3 644.4,573.8 644.8,594.6 645.2,575.3 645.6,570.3 646.0,593.4 646.4,580.7 646.8,568.4 647.2,589.4 647.6,584.4 647.9,564.7 648.3,586.5 648.7,589.1 649.1,566.3 649.5,581.6 649.9,593.7 650.3,568.1 650.7,575.6 651.1,593.5 651.5,572.7 651.9,572.7 652.2,594.1 652.6,575.6 653.0,569.6 653.4,590.3 653.8,581.0 654.2,568.6 654.6,589.5 655.0,585.6 655.4,566.8 655.8,585.4 656.2,586.8 656.5,567.0 656.9,581.0 657.3,592.5 657.7,571.7 658.1,576.3 658.5,592.8 658.9,573.2 659.3,572.6 659.7,592.5 660.1,578.6 660.5,569.5 660.8,590.8 661.2,581.4 661.6,568.0 662.0,587.2 662.4,584.7 662.8,566.6 663.2,585.1 663.6,589.0 664.0,568.6 664.4,580.1 664.8,592.7 665.1,569.6 665.5,574.7 665.9,593.0 666.3,574.7 666.7,570.4 667.1,592.4 667.5,577.8 667.9,568.8 668.3,589.1 668.7,584.2 669.1,565.8 669.4,586.9 669.8,587.9 670.2,566.5 670.6,583.0 671.0,592.6 671.4,566.7 671.8,579.2 672.2,592.5 672.6,571.1 673.0,574.1 673.4,594.1 673.7,575.2 674.1,570.1 674.5,592.3 674.9,579.9 675.3,568.5 675.7,591.3 676.1,583.9 676.5,567.0 676.9,587.1 677.3,588.7 677.6,566.1 678.0,581.7 678.4,589.9 678.8,568.1 679.2,577.3 679.6,591.9 680.0,573.6 680.4,573.8 680.8,592.7 681.2,577.0 681.6,569.5 681.9,590.4 682.3,580.1 682.7,568.7 683.1,589.7 683.5,584.3 683.9,567.3 684.3,585.2 684.7,588.0 685.1,566.9 685.5,580.8 685.9,590.6 686.2,571.2 686.6,576.7 687.0,592.7 687.4,573.9 687.8,571.3 688.2,593.7 688.6,577.1 689.0,568.6 689.4,593.6 689.8,582.0 690.2,566.1 690.5,589.3 690.9,586.6 691.3,567.4 691.7,587.2 692.1,589.2 692.5,566.1 692.9,579.9 693.3,591.7 693.7,570.2 694.1,575.2 694.5,594.2 694.8,573.5 695.2,571.2 695.6,594.3 696.0,577.6 696.4,568.8 696.8,591.8 697.2,582.9 697.6,566.6 698.0,585.8 698.4,585.8 698.8,567.1 699.1,584.2 699.5,589.2 699.9,569.2 700.3,578.7 700.7,590.7 701.1,570.2 701.5,574.3 701.9,592.7 702.3,574.9 702.7,571.7 703.1,592.1 703.4,578.1 703.8,568.7 704.2,589.1 704.6,582.5 705.0,567.7 705.4,586.1 705.8,586.2 706.2,567.7 706.6,582.7 707.0,590.7 707.4,567.5 707.7,578.4 708.1,592.8 708.5,572.3 708.9,574.1 709.3,594.0 709.7,574.1 710.1,571.3 710.5,592.8 710.9,579.7 711.3,567.9 711.6,592.6 712.0,584.1 712.4,565.0 712.8,585.3 713.2,587.9 713.6,566.9 714.0,581.8 714.4,590.8 714.8,569.5 715.2,577.8 715.6,592.2 715.9,571.9 716.3,573.0 716.7,595.0 717.1,574.9 717.5,568.7 717.9,590.9 718.3,580.7 718.7,565.9 719.1,589.7 719.5,584.0 719.9,568.1 720.2,584.5 720.6,589.2 721.0,568.3 721.4,582.6 721.8,591.4 722.2,568.0 722.6,577.9 723.0,591.7 723.4,573.1 723.8,571.0 724.2,593.7 724.5,577.3 724.9,570.1 725.3,590.5 725.7,581.2 726.1,569.0 726.5,587.8 726.9,585.7 727.3,568.1 727.7,585.3 728.1,588.9 728.5,569.4 728.8,580.5 729.2,591.9 729.6,570.4 730.0,576.2 730.4,592.7 730.8,573.6 731.2,571.4 731.6,592.2 732.0,578.8 732.4,568.1 732.8,591.4 733.1,582.5 733.5,566.9 733.9,587.7 734.3,586.8 734.7,566.0 735.1,583.2 735.5,590.0 735.9,568.1 736.3,579.3 736.7,592.6 737.1,570.7 737.4,575.1 737.8,593.3 738.2,574.1 738.6,570.2 739.0,592.4 739.4,579.9 739.8,567.6 740.2,590.6 740.6,583.4 741.0,568.0 741.4,587.0 741.7,587.1 742.1,566.8 742.5,580.5 742.9,590.4 743.3,568.8 743.7,577.7 744.1,592.1 744.5,570.5 744.9,573.6 745.3,594.4 745.6,575.1 746.0,570.7 746.4,592.4 746.8,579.6 747.2,569.0 747.6,588.7 748.0,585.0 748.4,569.4 748.8,585.2 749.2,587.6 749.6,568.5 749.9,581.5 750.3,589.0 750.7,569.7 751.1,577.2 751.5,592.7 751.9,572.6 752.3,573.4 752.7,592.5 753.1,575.5 753.5,569.5 753.9,592.2 754.2,580.4 754.6,567.0 755.0,589.0 755.4,586.6 755.8,565.7 756.2,585.3 756.6,585.2 757.0,566.1 757.4,580.4 757.8,592.3 758.2,568.7 758.5,575.7 758.9,595.0 759.3,572.2 759.7,571.9 760.1,592.3 760.5,576.4 760.9,568.5 761.3,592.2 761.7,583.1 762.1,566.1 762.5,587.6 762.8,586.5 763.2,567.1 763.6,584.4 764.0,589.1 764.4,568.6 764.8,580.5 765.2,591.6 765.6,567.6 766.0,575.6 766.4,592.6 766.8,574.2 767.1,570.8 767.5,591.3 767.9,578.2 768.3,568.3 768.7,591.0 769.1,586.0 769.5,570.8 769.9,586.9 770.3,585.6 770.7,568.0 771.1,583.7 771.4,587.6 771.8,568.3 772.2,579.3 772.6,592.6 773.0,571.2 773.4,574.7 773.8,591.8 774.2,575.3 774.6,570.0 775.0,593.9 775.3,578.3 775.7,568.0 776.1,591.0 776.5,583.3 776.9,566.3 777.3,587.4 777.7,588.1 778.1,566.7 778.5,583.2 778.9,591.0 779.3,568.2 779.6,576.7 780.0,593.2 780.4,570.7 780.8,573.8 781.2,594.3 781.6,575.6 782.0,569.8 782.4,592.5 782.8,580.7 783.2,566.7 783.6,591.1 783.9,584.4 784.3,565.1 784.7,587.1 785.1,588.3 785.5,567.5 785.9,581.2 786.3,591.1 786.7,569.2 787.1,577.4 787.5,593.5 787.9,570.7 788.2,572.2 788.6,593.9 789.0,575.9 789.4,570.8 789.8,592.3 790.2,581.7 790.6,568.4 791.0,588.1 791.4,584.4 791.8,568.5 792.2,584.4 792.5,588.9 792.9,568.6 793.3,583.5 793.7,592.2 794.1,570.1 794.5,574.6 794.9,592.7 795.3,572.3 795.7,573.0 796.1,593.4 796.5,577.6 796.8,569.2 797.2,590.2 797.6,581.8 798.0,566.1 798.4,587.6 798.8,584.3 799.2,566.2 799.6,583.6 800.0,590.9 800.4,568.4 800.8,579.9 801.1,594.2 801.5,570.8 801.9,575.0 802.3,594.1 802.7,573.0 803.1,570.4 803.5,594.1 803.9,577.8 804.3,568.3 804.7,591.6 805.1,582.5 805.4,566.7 805.8,587.8 806.2,586.7 806.6,567.3 807.0,583.2 807.4,592.2 807.8,566.9 808.2,577.8 808.6,592.9 809.0,570.8 809.3,578.8 809.7,578.9 810.1,579.8 810.5,579.7 810.9,579.1 811.3,580.0 811.7,580.2 812.1,579.7 812.5,579.9 812.9,579.3 813.3,580.7 813.6,579.4 814.0,579.0 814.4,579.6 814.8,580.0 815.2,579.3 815.6,579.4 816.0,581.1 816.4,580.4 816.8,581.0 817.2,579.7 817.6,579.4 817.9,579.5 818.3,579.8 818.7,579.8 819.1,579.3 819.5,580.3 819.9,580.4 820.3,580.9 820.7,579.5 821.1,580.2 821.5,578.5 821.9,579.7 822.2,579.4 822.6,580.1 823.0,578.4 823.4,579.8 823.8,578.7 824.2,579.8 824.6,579.9 825.0,579.3 825.4,578.9 825.8,579.0 826.2,579.3 826.5,579.6 826.9,579.5 827.3,579.8 827.7,579.8 828.1,579.1 828.5,579.7 828.9,579.6 829.3,578.4 829.7,580.7 830.1,580.8 830.5,580.4 830.8,579.6 831.2,580.9 831.6,579.7 832.0,578.8 832.4,579.0 832.8,580.3 833.2,578.2 833.6,579.6 834.0,580.0 834.4,580.6 834.8,578.8 835.1,580.6 835.5,580.9 835.9,579.1 836.3,579.6 836.7,581.2 837.1,579.0 837.5,579.6 837.9,579.9 838.3,579.9 838.7,579.5 839.1,581.3 839.4,580.3 839.8,580.1 840.2,580.3 840.6,579.0 841.0,579.3 841.4,579.4 841.8,580.3 842.2,579.4 842.6,579.4 843.0,579.3 843.3,579.7 843.7,579.9 844.1,579.7 844.5,580.3 844.9,579.2 845.3,580.6 845.7,578.9 846.1,580.2 846.5,580.1 846.9,577.6 847.3,578.9 847.6,579.5 848.0,580.4 848.4,579.9 848.8,580.0 849.2,580.1 849.6,579.6 850.0,580.4 850.4,580.1 850.8,579.5 851.2,578.3 851.6,579.8 851.9,579.7 852.3,580.3 852.7,580.2 853.1,579.4 853.5,580.6 853.9,579.9 854.3,579.7 854.7,579.4 855.1,580.0 855.5,578.5 855.9,580.7 856.2,581.3 856.6,575.7 857.0,579.0 857.4,579.2 857.8,582.1 858.2,579.8 858.6,578.7 859.0,579.1 859.4,579.9 859.8,579.8 860.2,579.4 860.5,580.4 860.9,579.8 861.3,580.7 861.7,579.6 862.1,580.2 862.5,580.2 862.9,579.9 863.3,579.3 863.7,579.6 864.1,580.6 864.5,579.9 864.8,579.0 865.2,579.3 865.6,580.0 866.0,580.1 866.4,579.1 866.8,580.0 867.2,581.0 867.6,580.5 868.0,580.8 868.4,580.3 868.8,580.3 869.1,580.2 869.5,579.8 869.9,579.7 870.3,580.8 870.7,581.9 871.1,580.4 871.5,579.6 871.9,579.9 872.3,580.3 872.7,579.4 873.0,579.9 873.4,579.4 873.8,580.3 874.2,579.0 874.6,580.8 875.0,579.0 875.4,578.8 875.8,579.5 876.2,580.2 876.6,579.1 877.0,580.3 877.3,578.9 877.7,580.8 878.1,580.0 878.5,580.3 878.9,577.6 879.3,579.1 879.7,580.1" fill="none" stroke="#128012" stroke-width="1.3" shape-rendering="crispEdges" stroke-linejoin="bevel"/>
<rect x="897.8" y="501.8" width="9.3" height="8.3" fill="#ff0000"/>
<text x="912.01" y="510" font-size="13.1" font-weight="400" fill="#f4f4f4" stroke="#f4f4f4" stroke-width="0.3" textLength="28.39" lengthAdjust="spacing">Real</text>
<rect x="897.8" y="533.9" width="9.3" height="9.0" fill="#008000"/>
<text x="911.96" y="542.9" font-size="13.1" font-weight="400" fill="#f4f4f4" stroke="#f4f4f4" stroke-width="0.3" textLength="63.64" lengthAdjust="spacing">Imaginary</text>
</g>
<g id="mag">
<text x="1235.14" y="481.9" font-size="20.5" font-weight="700" fill="#f4f4f4" textLength="459.64" lengthAdjust="spacing">Magnitude -&gt; HighPass -&gt; Gain Normalization</text>
<rect x="1074" y="492" width="781" height="181" fill="#b0b0b0"/>
<rect x="1071" y="499.0" width="1" height="168.51999999999998" fill="#ffffff"/>
<rect x="1063" y="499" width="8" height="1" fill="#ffffff"/>
<rect x="1067" y="503" width="4" height="1" fill="#ffffff"/>
<rect x="1067" y="507" width="4" height="1" fill="#ffffff"/>
<rect x="1067" y="512" width="4" height="1" fill="#ffffff"/>
<rect x="1067" y="516" width="4" height="1" fill="#ffffff"/>
<rect x="1063" y="520" width="8" height="1" fill="#ffffff"/>
<rect x="1067" y="524" width="4" height="1" fill="#ffffff"/>
<rect x="1067" y="528" width="4" height="1" fill="#ffffff"/>
<rect x="1067" y="533" width="4" height="1" fill="#ffffff"/>
<rect x="1067" y="537" width="4" height="1" fill="#ffffff"/>
<rect x="1063" y="541" width="8" height="1" fill="#ffffff"/>
<rect x="1067" y="545" width="4" height="1" fill="#ffffff"/>
<rect x="1067" y="549" width="4" height="1" fill="#ffffff"/>
<rect x="1067" y="553" width="4" height="1" fill="#ffffff"/>
<rect x="1067" y="558" width="4" height="1" fill="#ffffff"/>
<rect x="1063" y="562" width="8" height="1" fill="#ffffff"/>
<rect x="1067" y="566" width="4" height="1" fill="#ffffff"/>
<rect x="1067" y="570" width="4" height="1" fill="#ffffff"/>
<rect x="1067" y="574" width="4" height="1" fill="#ffffff"/>
<rect x="1067" y="579" width="4" height="1" fill="#ffffff"/>
<rect x="1063" y="583" width="8" height="1" fill="#ffffff"/>
<rect x="1067" y="587" width="4" height="1" fill="#ffffff"/>
<rect x="1067" y="591" width="4" height="1" fill="#ffffff"/>
<rect x="1067" y="595" width="4" height="1" fill="#ffffff"/>
<rect x="1067" y="600" width="4" height="1" fill="#ffffff"/>
<rect x="1063" y="604" width="8" height="1" fill="#ffffff"/>
<rect x="1067" y="608" width="4" height="1" fill="#ffffff"/>
<rect x="1067" y="612" width="4" height="1" fill="#ffffff"/>
<rect x="1067" y="616" width="4" height="1" fill="#ffffff"/>
<rect x="1067" y="620" width="4" height="1" fill="#ffffff"/>
<rect x="1063" y="625" width="8" height="1" fill="#ffffff"/>
<rect x="1067" y="629" width="4" height="1" fill="#ffffff"/>
<rect x="1067" y="633" width="4" height="1" fill="#ffffff"/>
<rect x="1067" y="637" width="4" height="1" fill="#ffffff"/>
<rect x="1067" y="641" width="4" height="1" fill="#ffffff"/>
<rect x="1063" y="646" width="8" height="1" fill="#ffffff"/>
<rect x="1067" y="650" width="4" height="1" fill="#ffffff"/>
<rect x="1067" y="654" width="4" height="1" fill="#ffffff"/>
<rect x="1067" y="658" width="4" height="1" fill="#ffffff"/>
<rect x="1067" y="662" width="4" height="1" fill="#ffffff"/>
<rect x="1063" y="667" width="8" height="1" fill="#ffffff"/>
<text x="1058" y="504.4" font-size="14.2" font-weight="400" fill="#f4f4f4" text-anchor="end" stroke="#f4f4f4" stroke-width="0.3">2</text>
<text x="1058" y="525.4" font-size="14.2" font-weight="400" fill="#f4f4f4" text-anchor="end" stroke="#f4f4f4" stroke-width="0.3">1,5</text>
<text x="1058" y="546.4" font-size="14.2" font-weight="400" fill="#f4f4f4" text-anchor="end" stroke="#f4f4f4" stroke-width="0.3">1</text>
<text x="1058" y="567.4" font-size="14.2" font-weight="400" fill="#f4f4f4" text-anchor="end" stroke="#f4f4f4" stroke-width="0.3">0,5</text>
<text x="1058" y="588.4" font-size="14.2" font-weight="400" fill="#f4f4f4" text-anchor="end" stroke="#f4f4f4" stroke-width="0.3">0</text>
<text x="1058" y="609.4" font-size="14.2" font-weight="400" fill="#f4f4f4" text-anchor="end" stroke="#f4f4f4" stroke-width="0.3">-0,5</text>
<text x="1058" y="630.4" font-size="14.2" font-weight="400" fill="#f4f4f4" text-anchor="end" stroke="#f4f4f4" stroke-width="0.3">-1</text>
<text x="1058" y="651.4" font-size="14.2" font-weight="400" fill="#f4f4f4" text-anchor="end" stroke="#f4f4f4" stroke-width="0.3">-1,5</text>
<text x="1058" y="672.4" font-size="14.2" font-weight="400" fill="#f4f4f4" text-anchor="end" stroke="#f4f4f4" stroke-width="0.3">-2</text>
<text transform="translate(1022.6,582) rotate(-90)" x="-44.10" y="0" font-size="18.5" font-weight="700" fill="#f4f4f4" textLength="88.25" lengthAdjust="spacing">Amplitude</text>
<rect x="1081" y="676" width="766" height="1" fill="#ffffff"/>
<rect x="1081" y="676" width="1" height="8.5" fill="#ffffff"/>
<rect x="1111" y="676" width="1" height="4" fill="#ffffff"/>
<rect x="1142" y="676" width="1" height="4" fill="#ffffff"/>
<rect x="1173" y="676" width="1" height="4" fill="#ffffff"/>
<rect x="1203" y="676" width="1" height="4" fill="#ffffff"/>
<rect x="1234" y="676" width="1" height="8.5" fill="#ffffff"/>
<rect x="1264" y="676" width="1" height="4" fill="#ffffff"/>
<rect x="1295" y="676" width="1" height="4" fill="#ffffff"/>
<rect x="1326" y="676" width="1" height="4" fill="#ffffff"/>
<rect x="1356" y="676" width="1" height="4" fill="#ffffff"/>
<rect x="1387" y="676" width="1" height="8.5" fill="#ffffff"/>
<rect x="1417" y="676" width="1" height="4" fill="#ffffff"/>
<rect x="1448" y="676" width="1" height="4" fill="#ffffff"/>
<rect x="1479" y="676" width="1" height="4" fill="#ffffff"/>
<rect x="1509" y="676" width="1" height="4" fill="#ffffff"/>
<rect x="1540" y="676" width="1" height="8.5" fill="#ffffff"/>
<rect x="1570" y="676" width="1" height="4" fill="#ffffff"/>
<rect x="1601" y="676" width="1" height="4" fill="#ffffff"/>
<rect x="1632" y="676" width="1" height="4" fill="#ffffff"/>
<rect x="1662" y="676" width="1" height="4" fill="#ffffff"/>
<rect x="1693" y="676" width="1" height="8.5" fill="#ffffff"/>
<rect x="1723" y="676" width="1" height="4" fill="#ffffff"/>
<rect x="1754" y="676" width="1" height="4" fill="#ffffff"/>
<rect x="1785" y="676" width="1" height="4" fill="#ffffff"/>
<rect x="1815" y="676" width="1" height="4" fill="#ffffff"/>
<rect x="1846" y="676" width="1" height="8.5" fill="#ffffff"/>
<text x="1081.3" y="699.7" font-size="14.2" font-weight="400" fill="#f4f4f4" text-anchor="middle" stroke="#f4f4f4" stroke-width="0.3">0</text>
<text x="1234.3" y="699.7" font-size="14.2" font-weight="400" fill="#f4f4f4" text-anchor="middle" stroke="#f4f4f4" stroke-width="0.3">10</text>
<text x="1387.3" y="699.7" font-size="14.2" font-weight="400" fill="#f4f4f4" text-anchor="middle" stroke="#f4f4f4" stroke-width="0.3">20</text>
<text x="1540.3" y="699.7" font-size="14.2" font-weight="400" fill="#f4f4f4" text-anchor="middle" stroke="#f4f4f4" stroke-width="0.3">30</text>
<text x="1693.3" y="699.7" font-size="14.2" font-weight="400" fill="#f4f4f4" text-anchor="middle" stroke="#f4f4f4" stroke-width="0.3">40</text>
<text x="1846.3" y="699.7" font-size="14.2" font-weight="400" fill="#f4f4f4" text-anchor="middle" stroke="#f4f4f4" stroke-width="0.3">50</text>
<text x="1421.83" y="719.4" font-size="16.4" font-weight="700" fill="#f4f4f4" textLength="83.59" lengthAdjust="spacing">Time (ms)</text>
<polyline points="1081.3,543.8 1083.5,544.2 1084.6,546.2 1085.1,550.4 1087.3,635.3 1088.0,638.7 1089.3,639.5 1091.5,639.1 1092.4,637.4 1094.5,572.2 1095.5,552.5 1096.5,549.2 1099.1,549.6 1100.2,551.7 1100.7,555.9 1102.9,634.8 1103.6,638.2 1104.9,639.0 1107.1,638.6 1108.0,636.9 1110.1,573.1 1111.1,553.4 1112.1,550.0 1114.7,550.4 1115.8,552.5 1116.3,556.7 1118.5,634.6 1119.2,637.9 1120.5,638.7 1122.7,638.3 1123.6,636.6 1125.7,574.7 1126.7,555.0 1127.7,551.7 1130.3,552.1 1131.4,554.2 1131.9,558.4 1134.1,633.9 1134.8,637.2 1136.1,638.1 1138.3,637.6 1139.2,636.0 1141.2,576.0 1141.8,545.4 1142.5,546.4 1144.7,546.5 1146.9,547.5 1149.2,547.2 1151.4,546.8 1153.6,547.2 1155.8,547.0 1158.1,547.8 1160.3,547.5 1162.5,547.7 1163.0,546.2 1163.3,548.3 1165.3,635.7 1166.0,639.1 1167.3,639.9 1169.5,639.5 1170.4,637.8 1172.4,575.2 1173.0,544.6 1173.7,545.8 1175.9,547.3 1178.1,547.7 1180.4,548.2 1182.6,547.9 1184.8,548.3 1187.0,549.1 1189.3,548.6 1191.5,549.3 1193.7,548.9 1194.5,551.3 1196.5,637.6 1197.2,641.0 1198.5,641.8 1200.7,641.4 1201.6,639.7 1203.6,577.3 1204.2,546.7 1204.9,548.4 1207.1,547.7 1209.3,548.4 1211.6,548.5 1213.8,547.7 1216.0,547.9 1218.2,548.5 1220.5,547.8 1222.7,548.3 1224.9,548.1 1225.4,544.6 1225.7,546.7 1227.7,637.3 1228.4,640.6 1229.7,641.5 1231.9,641.0 1232.8,639.4 1234.8,574.3 1235.4,543.7 1236.1,544.5 1238.3,546.5 1240.5,547.4 1242.8,548.3 1245.0,549.5 1247.2,549.9 1249.4,550.4 1251.7,550.6 1253.9,550.9 1256.1,550.8 1256.9,553.0 1258.9,635.4 1259.6,638.8 1260.9,639.6 1263.1,639.2 1264.0,637.5 1266.1,573.9 1267.1,554.2 1268.1,550.9 1270.7,551.3 1271.8,553.4 1272.3,557.6 1274.5,638.2 1275.2,641.6 1276.5,642.4 1278.7,642.0 1279.6,640.3 1281.7,572.2 1282.7,552.5 1283.7,549.2 1286.3,549.6 1287.4,551.7 1287.9,555.9 1290.1,635.1 1290.8,638.4 1292.1,639.3 1294.3,638.9 1295.2,637.2 1297.6,560.1 1298.3,541.2 1299.0,542.1 1299.8,546.7 1301.9,546.2 1302.6,542.1 1303.2,545.4 1305.7,636.7 1306.4,640.0 1307.7,640.9 1309.9,640.4 1310.8,638.8 1313.2,557.8 1313.9,538.9 1314.6,539.8 1315.4,544.4 1317.5,543.9 1318.2,539.8 1318.8,543.1 1321.3,636.8 1322.0,640.1 1323.3,641.0 1325.5,640.6 1326.4,638.9 1328.8,551.5 1329.5,532.6 1330.2,533.5 1331.0,538.1 1333.1,537.7 1333.8,533.5 1334.4,536.8 1336.9,634.4 1337.6,637.8 1338.9,638.6 1341.1,638.2 1342.0,636.5 1344.4,549.6 1345.1,530.7 1345.8,531.6 1346.6,536.2 1348.7,535.8 1349.4,531.6 1350.0,534.9 1352.5,636.0 1353.2,639.4 1354.5,640.2 1356.7,639.8 1357.6,638.1 1360.0,553.0 1360.7,534.1 1361.4,534.9 1362.2,539.5 1364.3,539.1 1365.0,534.9 1365.6,538.3 1368.1,636.8 1368.8,640.1 1370.1,641.0 1372.3,640.5 1373.2,638.9 1375.6,559.7 1376.3,540.8 1377.0,541.6 1377.8,546.2 1379.9,545.8 1380.6,541.6 1381.2,545.0 1383.7,636.0 1384.4,639.4 1385.7,640.2 1387.9,639.8 1388.8,638.1 1390.9,571.4 1391.9,551.7 1392.9,548.3 1395.5,548.8 1396.6,550.9 1397.1,555.0 1399.3,635.0 1400.0,638.3 1401.3,639.2 1403.5,638.7 1404.4,637.1 1406.5,572.2 1407.5,552.5 1408.5,549.2 1411.1,549.6 1412.2,551.7 1412.7,555.9 1414.9,638.0 1415.6,641.3 1416.9,642.1 1419.1,641.7 1420.0,640.0 1422.0,578.5 1422.6,547.9 1423.3,548.7 1425.5,550.4 1427.7,550.2 1430.0,550.4 1432.2,551.5 1434.4,550.9 1436.6,551.5 1438.9,551.4 1441.1,552.0 1443.3,552.0 1443.8,549.2 1444.1,551.3 1446.1,637.4 1446.8,640.7 1448.1,641.6 1450.3,641.2 1451.2,639.5 1453.2,572.6 1453.8,542.1 1454.5,542.9 1456.7,545.2 1458.9,545.7 1461.2,546.3 1463.4,546.9 1465.6,547.9 1467.8,548.2 1470.1,548.2 1472.3,548.1 1474.5,548.9 1475.3,550.9 1477.3,634.8 1478.0,638.1 1479.3,639.0 1481.5,638.5 1482.4,636.9 1484.4,577.3 1485.0,546.7 1485.7,547.6 1487.9,547.9 1490.1,549.0 1492.4,548.3 1494.6,549.3 1496.8,549.1 1499.0,548.9 1501.3,548.6 1503.5,549.3 1505.7,548.7 1506.5,551.3 1508.5,635.7 1509.2,639.1 1510.5,639.9 1512.7,639.5 1513.6,637.8 1515.6,578.5 1516.2,547.9 1516.9,549.4 1519.1,549.6 1521.3,549.9 1523.6,550.1 1525.8,550.2 1528.0,549.7 1530.2,549.4 1532.5,550.3 1534.7,550.4 1536.9,549.5 1537.7,552.1 1539.7,635.8 1540.4,639.1 1541.7,639.9 1543.9,639.5 1544.8,637.9 1546.9,572.6 1547.9,553.0 1548.9,549.6 1551.5,550.0 1552.6,552.1 1553.1,556.3 1555.3,636.3 1556.0,639.7 1557.3,640.5 1559.5,640.1 1560.4,638.4 1562.5,572.2 1563.5,552.5 1564.5,549.2 1567.1,549.6 1568.2,551.7 1568.7,555.9 1570.9,637.1 1571.6,640.5 1572.9,641.3 1575.1,640.9 1576.0,639.2 1578.1,572.2 1579.1,552.5 1580.1,549.2 1582.7,549.6 1583.8,551.7 1584.3,555.9 1586.5,635.5 1587.2,638.8 1588.5,639.7 1590.7,639.3 1591.6,637.6 1593.7,571.4 1594.7,551.7 1595.7,548.3 1598.3,548.8 1599.4,550.9 1599.9,555.0 1602.1,634.4 1602.8,637.8 1604.1,638.6 1606.3,638.2 1607.2,636.5 1609.6,554.6 1610.3,535.8 1611.0,536.6 1611.8,541.2 1613.9,540.8 1614.6,536.6 1615.2,540.0 1617.7,636.1 1618.4,639.5 1619.7,640.3 1621.9,639.9 1622.8,638.2 1625.2,551.3 1625.9,532.4 1626.6,533.3 1627.4,537.9 1629.5,537.4 1630.2,533.3 1630.8,536.6 1633.3,636.3 1634.0,639.6 1635.3,640.5 1637.5,640.0 1638.4,638.4 1640.8,552.1 1641.5,533.3 1642.2,534.1 1643.0,538.7 1645.1,538.3 1645.8,534.1 1646.4,537.4 1648.9,638.0 1649.6,641.3 1650.9,642.2 1653.1,641.7 1654.0,640.1 1656.4,560.1 1657.1,541.2 1657.8,542.1 1658.6,546.7 1660.7,546.2 1661.4,542.1 1662.0,545.4 1664.5,634.0 1665.2,637.3 1666.5,638.2 1668.7,637.8 1669.6,636.1 1672.0,559.7 1672.7,540.8 1673.4,541.6 1674.2,546.2 1676.3,545.8 1677.0,541.6 1677.6,545.0 1680.1,638.1 1680.8,641.4 1682.1,642.3 1684.3,641.8 1685.2,640.2 1687.3,565.9 1688.3,546.2 1689.3,542.9 1691.9,543.3 1693.0,545.4 1693.5,549.6 1695.7,635.9 1696.4,639.3 1697.7,640.1 1699.9,639.7 1700.8,638.0 1702.8,577.7 1703.4,547.1 1704.1,548.0 1706.3,549.4 1708.5,549.3 1710.8,549.5 1713.0,550.1 1715.2,550.1 1717.4,550.9 1719.7,550.7 1721.9,551.0 1724.1,550.4 1724.6,548.8 1724.9,550.9 1726.9,636.9 1727.6,640.2 1728.9,641.0 1731.1,640.6 1732.0,639.0 1734.0,575.6 1734.6,545.0 1735.3,546.3 1737.5,547.4 1739.7,548.7 1742.0,549.5 1744.2,550.6 1746.4,551.0 1748.6,551.1 1750.9,551.6 1753.1,551.9 1755.3,551.9 1756.1,554.2 1758.1,637.5 1758.8,640.9 1760.1,641.7 1762.3,641.3 1763.2,639.6 1765.2,576.4 1765.8,545.8 1766.5,547.2 1768.7,547.1 1770.9,547.4 1773.2,548.0 1775.4,548.3 1777.6,548.6 1779.8,548.9 1782.1,548.8 1784.3,548.4 1786.5,548.3 1787.3,550.9 1789.3,636.6 1790.0,639.9 1791.3,640.7 1793.5,640.3 1794.4,638.6 1796.4,574.3 1797.0,543.7 1797.7,544.7 1799.9,545.7 1802.1,546.4 1804.4,546.9 1806.6,547.2 1808.8,547.8 1811.0,547.7 1813.3,548.2 1815.5,548.1 1817.7,547.9 1818.2,545.4 1818.5,547.5 1820.5,635.0 1821.2,638.4 1822.5,639.2 1824.7,638.8 1825.6,637.1 1828.0,559.7 1828.7,540.8 1829.4,541.6 1830.2,546.2 1832.3,545.8 1833.0,541.6 1833.6,545.0 1836.1,636.9 1836.8,640.2 1838.1,641.1 1840.3,640.6 1841.2,639.0 1843.3,565.5 1844.3,545.8 1845.3,542.5 1846.3,542.6" fill="none" stroke="#f21414" stroke-width="1.25" stroke-linejoin="round"/>
<rect x="1866.9" y="501.9" width="8.4" height="8.1" fill="#ff0000"/>
<text x="1881.71" y="509.9" font-size="13.1" font-weight="400" fill="#f4f4f4" stroke="#f4f4f4" stroke-width="0.3" textLength="69.01" lengthAdjust="spacing">Magnitude</text>
</g>
<g id="bool">
<text x="776.33" y="768.5" font-size="20.5" font-weight="700" fill="#f4f4f4" textLength="377.24" lengthAdjust="spacing">Symbol-Sync -&gt; Binarize -&gt; Correlate</text>
<rect x="99" y="779" width="1731" height="181" fill="#b0b0b0"/>
<rect x="96" y="785" width="1" height="169" fill="#ffffff"/>
<rect x="88" y="797" width="8" height="1" fill="#ffffff"/>
<rect x="88" y="819" width="8" height="1" fill="#ffffff"/>
<rect x="88" y="842" width="8" height="1" fill="#ffffff"/>
<rect x="88" y="864" width="8" height="1" fill="#ffffff"/>
<rect x="88" y="886" width="8" height="1" fill="#ffffff"/>
<rect x="88" y="909" width="8" height="1" fill="#ffffff"/>
<rect x="88" y="931" width="8" height="1" fill="#ffffff"/>
<rect x="88" y="954" width="8" height="1" fill="#ffffff"/>
<rect x="92" y="792" width="4" height="1" fill="#ffffff"/>
<rect x="92" y="803" width="4" height="1" fill="#ffffff"/>
<rect x="90" y="808" width="6" height="1" fill="#ffffff"/>
<rect x="92" y="814" width="4" height="1" fill="#ffffff"/>
<rect x="92" y="825" width="4" height="1" fill="#ffffff"/>
<rect x="90" y="831" width="6" height="1" fill="#ffffff"/>
<rect x="92" y="836" width="4" height="1" fill="#ffffff"/>
<rect x="92" y="847" width="4" height="1" fill="#ffffff"/>
<rect x="90" y="853" width="6" height="1" fill="#ffffff"/>
<rect x="92" y="858" width="4" height="1" fill="#ffffff"/>
<rect x="92" y="870" width="4" height="1" fill="#ffffff"/>
<rect x="90" y="875" width="6" height="1" fill="#ffffff"/>
<rect x="92" y="881" width="4" height="1" fill="#ffffff"/>
<rect x="92" y="892" width="4" height="1" fill="#ffffff"/>
<rect x="90" y="898" width="6" height="1" fill="#ffffff"/>
<rect x="92" y="903" width="4" height="1" fill="#ffffff"/>
<rect x="92" y="914" width="4" height="1" fill="#ffffff"/>
<rect x="90" y="920" width="6" height="1" fill="#ffffff"/>
<rect x="92" y="925" width="4" height="1" fill="#ffffff"/>
<rect x="92" y="937" width="4" height="1" fill="#ffffff"/>
<rect x="90" y="943" width="6" height="1" fill="#ffffff"/>
<rect x="92" y="948" width="4" height="1" fill="#ffffff"/>
<text x="83" y="802.4" font-size="14.2" font-weight="400" fill="#f4f4f4" text-anchor="end" stroke="#f4f4f4" stroke-width="0.3">1,2</text>
<text x="83" y="824.4" font-size="14.2" font-weight="400" fill="#f4f4f4" text-anchor="end" stroke="#f4f4f4" stroke-width="0.3">1</text>
<text x="83" y="847.4" font-size="14.2" font-weight="400" fill="#f4f4f4" text-anchor="end" stroke="#f4f4f4" stroke-width="0.3">0,8</text>
<text x="83" y="869.4" font-size="14.2" font-weight="400" fill="#f4f4f4" text-anchor="end" stroke="#f4f4f4" stroke-width="0.3">0,6</text>
<text x="83" y="891.4" font-size="14.2" font-weight="400" fill="#f4f4f4" text-anchor="end" stroke="#f4f4f4" stroke-width="0.3">0,4</text>
<text x="83" y="914.4" font-size="14.2" font-weight="400" fill="#f4f4f4" text-anchor="end" stroke="#f4f4f4" stroke-width="0.3">0,2</text>
<text x="83" y="936.4" font-size="14.2" font-weight="400" fill="#f4f4f4" text-anchor="end" stroke="#f4f4f4" stroke-width="0.3">0</text>
<text x="83" y="959.4" font-size="14.2" font-weight="400" fill="#f4f4f4" text-anchor="end" stroke="#f4f4f4" stroke-width="0.3">-0.2</text>
<text transform="translate(46.9,868.5) rotate(-90)" x="-44.10" y="0" font-size="18.5" font-weight="700" fill="#f4f4f4" textLength="88.25" lengthAdjust="spacing">Amplitude</text>
<rect x="106" y="962" width="1718" height="2" fill="#ffffff"/>
<rect x="106" y="962" width="1" height="9" fill="#ffffff"/>
<rect x="163" y="962" width="1" height="5" fill="#ffffff"/>
<rect x="220" y="962" width="1" height="7" fill="#ffffff"/>
<rect x="276" y="962" width="1" height="5" fill="#ffffff"/>
<rect x="333" y="962" width="1" height="9" fill="#ffffff"/>
<rect x="389" y="962" width="1" height="5" fill="#ffffff"/>
<rect x="446" y="962" width="1" height="7" fill="#ffffff"/>
<rect x="503" y="962" width="1" height="5" fill="#ffffff"/>
<rect x="559" y="962" width="1" height="9" fill="#ffffff"/>
<rect x="616" y="962" width="1" height="5" fill="#ffffff"/>
<rect x="673" y="962" width="1" height="7" fill="#ffffff"/>
<rect x="729" y="962" width="1" height="5" fill="#ffffff"/>
<rect x="786" y="962" width="1" height="9" fill="#ffffff"/>
<rect x="843" y="962" width="1" height="5" fill="#ffffff"/>
<rect x="899" y="962" width="1" height="7" fill="#ffffff"/>
<rect x="956" y="962" width="1" height="5" fill="#ffffff"/>
<rect x="1013" y="962" width="1" height="9" fill="#ffffff"/>
<rect x="1069" y="962" width="1" height="5" fill="#ffffff"/>
<rect x="1126" y="962" width="1" height="7" fill="#ffffff"/>
<rect x="1183" y="962" width="1" height="5" fill="#ffffff"/>
<rect x="1239" y="962" width="1" height="9" fill="#ffffff"/>
<rect x="1296" y="962" width="1" height="5" fill="#ffffff"/>
<rect x="1353" y="962" width="1" height="7" fill="#ffffff"/>
<rect x="1409" y="962" width="1" height="5" fill="#ffffff"/>
<rect x="1466" y="962" width="1" height="9" fill="#ffffff"/>
<rect x="1522" y="962" width="1" height="5" fill="#ffffff"/>
<rect x="1579" y="962" width="1" height="7" fill="#ffffff"/>
<rect x="1636" y="962" width="1" height="5" fill="#ffffff"/>
<rect x="1692" y="962" width="1" height="9" fill="#ffffff"/>
<rect x="1749" y="962" width="1" height="5" fill="#ffffff"/>
<rect x="1806" y="962" width="1" height="7" fill="#ffffff"/>
<text x="105.7" y="986.8" font-size="14.0" font-weight="400" fill="#f4f4f4" text-anchor="middle" stroke="#f4f4f4" stroke-width="0.3">0</text>
<text x="332.7" y="986.8" font-size="14.0" font-weight="400" fill="#f4f4f4" text-anchor="middle" stroke="#f4f4f4" stroke-width="0.3">2</text>
<text x="558.7" y="986.8" font-size="14.0" font-weight="400" fill="#f4f4f4" text-anchor="middle" stroke="#f4f4f4" stroke-width="0.3">4</text>
<text x="785.7" y="986.8" font-size="14.0" font-weight="400" fill="#f4f4f4" text-anchor="middle" stroke="#f4f4f4" stroke-width="0.3">6</text>
<text x="1012.7" y="986.8" font-size="14.0" font-weight="400" fill="#f4f4f4" text-anchor="middle" stroke="#f4f4f4" stroke-width="0.3">8</text>
<text x="1238.7" y="986.8" font-size="14.0" font-weight="400" fill="#f4f4f4" text-anchor="middle" stroke="#f4f4f4" stroke-width="0.3">10</text>
<text x="1465.7" y="986.8" font-size="14.0" font-weight="400" fill="#f4f4f4" text-anchor="middle" stroke="#f4f4f4" stroke-width="0.3">12</text>
<text x="1691.7" y="986.8" font-size="14.0" font-weight="400" fill="#f4f4f4" text-anchor="middle" stroke="#f4f4f4" stroke-width="0.3">14</text>
<clipPath id="tmc"><rect x="900" y="985" width="130" height="22"/></clipPath><g clip-path="url(#tmc)">
<text x="922.83" y="1006.1" font-size="16.4" font-weight="700" fill="#f4f4f4" textLength="83.59" lengthAdjust="spacing">Time (ms)</text>
</g>
<clipPath id="bc"><rect x="101.5" y="780" width="1727" height="179"/></clipPath>
<g clip-path="url(#bc)">
<polyline points="106,819 112,931 117,819 123,931 129,819 134,931 140,819 146,931 152,819 157,931 163,819 169,931 174,819 180,931 186,819 192,931 197,819 203,931 209,819 215,931 220,819 226,819 232,819 237,931 243,819 249,819 255,819 260,931 266,819 272,819 277,819 283,931 289,819 295,819 300,819 306,931 312,819 318,931 323,819 329,931 335,819 340,931 346,819 352,931 358,819 363,931 369,819 375,931 380,819 386,931 392,819 398,931 403,819 409,931 415,819 421,931 426,819 432,819 438,819 443,931 449,819 455,819 461,819 466,931 472,819 478,819 483,819 489,931 495,819 501,819 506,819 512,931 518,819 524,931 529,819 535,931 541,819 546,931 552,819 558,931 564,819 569,931 575,819 581,931 586,819 592,931 598,819 604,931 609,819 615,931 621,819 627,931 632,819 638,819 644,819 649,931 655,819 661,819 667,819 672,931 678,819 684,819 689,819 695,931 701,819 707,819 712,819 718,931 724,819 730,931 735,819 741,931 747,819 752,931 758,819 764,931 770,819 775,931 781,819 787,931 792,819 798,931 804,819 810,931 815,819 821,931 827,819 833,931 838,819 844,819 850,819 855,931 861,819 867,819 873,819 878,931 884,819 890,819 895,819 901,931 907,819 913,819 918,819 924,931 930,819 936,931 941,819 947,931 953,819 958,931 964,819 970,931 976,819 981,931 987,819 993,931 998,819 1004,931 1010,819 1016,931 1021,819 1027,931 1033,819 1039,931 1044,819 1050,819 1056,819 1061,931 1067,819 1073,819 1079,819 1084,931 1090,819 1096,819 1101,819 1107,931 1113,819 1119,819 1124,819 1130,931 1136,819 1142,931 1147,819 1153,931 1159,819 1164,931 1170,819 1176,931 1182,819 1187,931 1193,819 1199,931 1204,819 1210,931 1216,819 1222,931 1227,819 1233,931 1239,819 1245,931 1250,819 1256,819 1262,819 1267,931 1273,819 1279,819 1285,819 1290,931 1296,819 1302,819 1307,819 1313,931 1319,819 1325,819 1330,819 1336,931 1342,819 1348,931 1353,819 1359,931 1365,819 1370,931 1376,819 1382,931 1388,819 1393,931 1399,819 1405,931 1410,819 1416,931 1422,819 1428,931 1433,819 1439,931 1445,819 1451,931 1456,819 1462,819 1468,819 1473,931 1479,819 1485,819 1491,819 1496,931 1502,819 1508,819 1513,819 1519,931 1525,819 1531,819 1536,819 1542,931 1548,819 1554,931 1559,819 1565,931 1571,819 1576,931 1582,819 1588,931 1594,819 1599,931 1605,819 1611,931 1616,819 1622,931 1628,819 1634,931 1639,819 1645,931 1651,819 1657,931 1662,819 1668,819 1674,819 1679,931 1685,819 1691,819 1697,819 1702,931 1708,819 1714,819 1719,819 1725,931 1731,819 1737,819 1742,819 1748,931 1754,819 1760,931 1765,819 1771,931 1777,819 1782,931 1788,819 1794,931 1800,819 1805,931 1811,819 1817,931" fill="none" stroke="#ff0808" stroke-width="1.2" stroke-linejoin="miter"/>
<path d="M100 813.5 H112 L106 825.5 Z" fill="none" stroke="#000" stroke-width="1.1"/>
<text x="105.2" y="806.2" font-size="13.2" font-weight="400" fill="#050505" text-anchor="middle" textLength="119.6" lengthAdjust="spacing" stroke="#050505" stroke-width="0.2">preamble_found: 0</text>
<path d="M306 813.5 H318 L312 825.5 Z" fill="none" stroke="#000" stroke-width="1.1"/>
<text x="311.2" y="806.2" font-size="13.2" font-weight="400" fill="#050505" text-anchor="middle" textLength="119.6" lengthAdjust="spacing" stroke="#050505" stroke-width="0.2">preamble_found: 0</text>
<path d="M512 813.5 H524 L518 825.5 Z" fill="none" stroke="#000" stroke-width="1.1"/>
<text x="517.2" y="806.2" font-size="13.2" font-weight="400" fill="#050505" text-anchor="middle" textLength="119.6" lengthAdjust="spacing" stroke="#050505" stroke-width="0.2">preamble_found: 0</text>
<path d="M718 813.5 H730 L724 825.5 Z" fill="none" stroke="#000" stroke-width="1.1"/>
<text x="723.2" y="806.2" font-size="13.2" font-weight="400" fill="#050505" text-anchor="middle" textLength="119.6" lengthAdjust="spacing" stroke="#050505" stroke-width="0.2">preamble_found: 0</text>
<path d="M924 813.5 H936 L930 825.5 Z" fill="none" stroke="#000" stroke-width="1.1"/>
<text x="929.2" y="806.2" font-size="13.2" font-weight="400" fill="#050505" text-anchor="middle" textLength="119.6" lengthAdjust="spacing" stroke="#050505" stroke-width="0.2">preamble_found: 0</text>
<path d="M1130 813.5 H1142 L1136 825.5 Z" fill="none" stroke="#000" stroke-width="1.1"/>
<text x="1135.2" y="806.2" font-size="13.2" font-weight="400" fill="#050505" text-anchor="middle" textLength="119.6" lengthAdjust="spacing" stroke="#050505" stroke-width="0.2">preamble_found: 0</text>
<path d="M1336 813.5 H1348 L1342 825.5 Z" fill="none" stroke="#000" stroke-width="1.1"/>
<text x="1341.2" y="806.2" font-size="13.2" font-weight="400" fill="#050505" text-anchor="middle" textLength="119.6" lengthAdjust="spacing" stroke="#050505" stroke-width="0.2">preamble_found: 0</text>
<path d="M1542 813.5 H1554 L1548 825.5 Z" fill="none" stroke="#000" stroke-width="1.1"/>
<text x="1547.2" y="806.2" font-size="13.2" font-weight="400" fill="#050505" text-anchor="middle" textLength="119.6" lengthAdjust="spacing" stroke="#050505" stroke-width="0.2">preamble_found: 0</text>
<path d="M1748 813.5 H1760 L1754 825.5 Z" fill="none" stroke="#000" stroke-width="1.1"/>
<text x="1753.2" y="806.2" font-size="13.2" font-weight="400" fill="#050505" text-anchor="middle" textLength="119.6" lengthAdjust="spacing" stroke="#050505" stroke-width="0.2">preamble_found: 0</text>
</g>
<rect x="1842.2" y="789.0" width="8.3" height="7.9" fill="#ff0000"/>
<text x="1856.41" y="796.8" font-size="13.1" font-weight="400" fill="#f4f4f4" stroke="#f4f4f4" stroke-width="0.3" textLength="93.75" lengthAdjust="spacing">Boolean signal</text>
</g>
</svg>
</body></html>
